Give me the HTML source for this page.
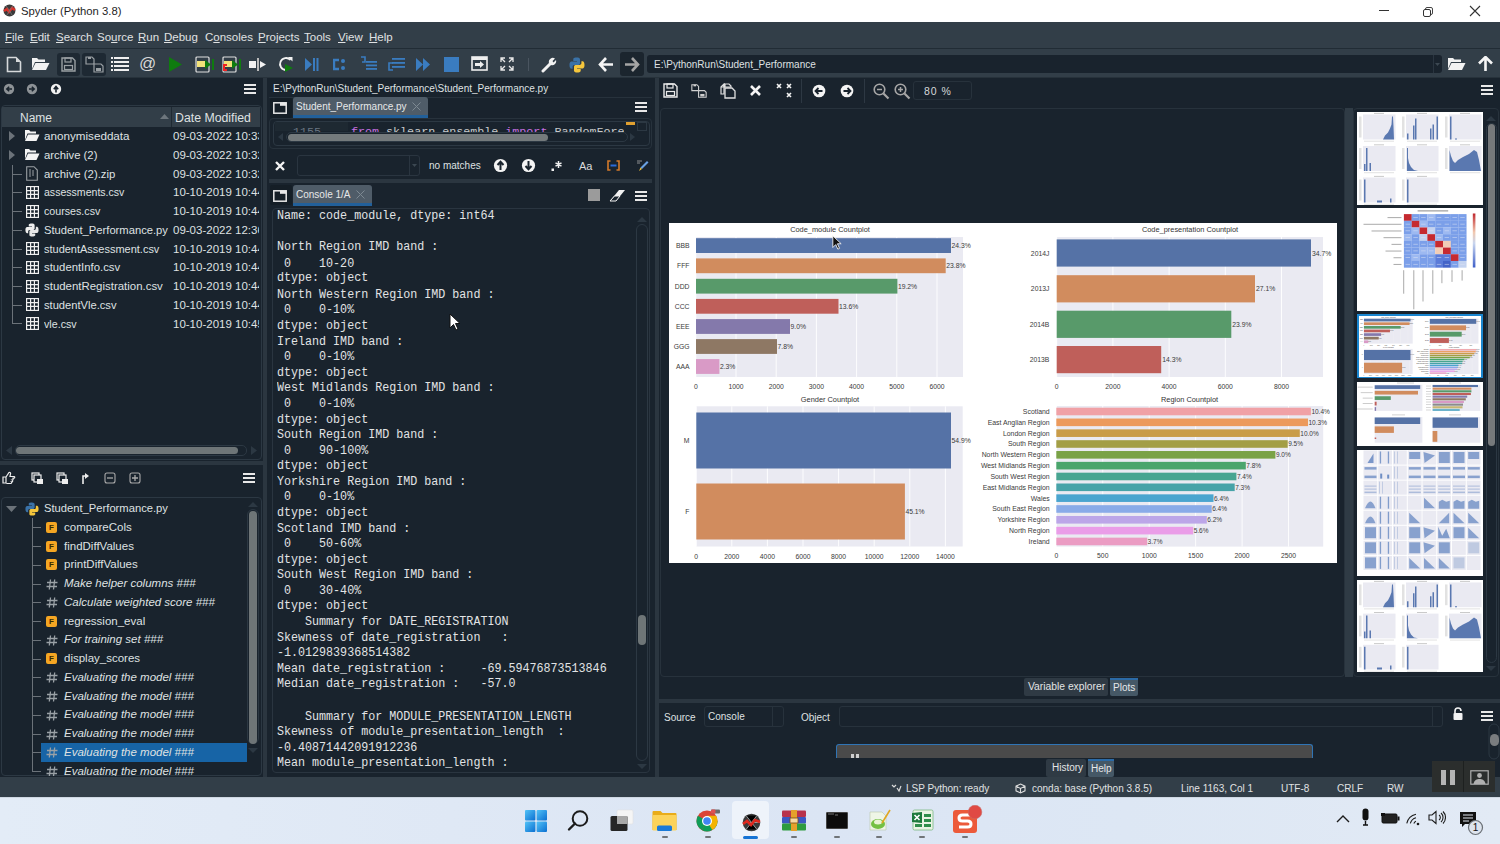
<!DOCTYPE html>
<html><head><meta charset="utf-8">
<style>
*{margin:0;padding:0;box-sizing:border-box}
html,body{width:1500px;height:844px;overflow:hidden;background:#19232D;font-family:"Liberation Sans",sans-serif;color:#dfe1e2}
.a{position:absolute}
.t{position:absolute;white-space:pre;line-height:1}
.mono{font-family:"Liberation Mono",monospace}
.frame{position:absolute;border:1px solid #2c3843;border-radius:4px}
.hb{position:absolute;width:12px;height:10px;border-top:2px solid #e8e8e8;border-bottom:2px solid #e8e8e8}
.hb:after{content:"";position:absolute;left:0;right:0;top:2px;height:2px;background:#e8e8e8}
</style></head><body>

<!-- TITLE BAR -->
<div class="a" style="left:0;top:0;width:1500px;height:22px;background:#fff"></div>
<svg class="a" style="left:3px;top:4px" width="13" height="13" viewBox="0 0 13 13"><circle cx="6.5" cy="6.5" r="6" fill="#3a3a3a"/><path d="M1 7 L4 5 L6 8 L9 4 L12 6" stroke="#d9302a" stroke-width="2.4" fill="none"/><path d="M3 2 L6.5 6.5 M10 2 L6.5 6.5 M6.5 6.5 L4 11 M6.5 6.5 L9 11" stroke="#777" stroke-width="0.8"/></svg>
<div class="t" style="left:21px;top:6px;font-size:11.3px;color:#1f1f1f">Spyder (Python 3.8)</div>
<div class="a" style="left:1379px;top:10px;width:10px;height:1px;background:#333"></div>
<div class="a" style="left:1425px;top:7px;width:8px;height:8px;border:1px solid #444;border-radius:2px"></div>
<div class="a" style="left:1423px;top:9px;width:8px;height:8px;border:1px solid #333;border-radius:2px;background:#fff"></div>
<svg class="a" style="left:1469px;top:5px" width="12" height="12" viewBox="0 0 12 12"><path d="M1 1L11 11M11 1L1 11" stroke="#333" stroke-width="1.1"/></svg>

<!-- MENU BAR -->
<div class="a" style="left:0;top:22px;width:1500px;height:26px;background:#323e48"></div>
<div class="a" style="left:0;top:48px;width:1500px;height:1px;background:#212c35"></div>
<div class="menu" style="position:absolute;left:0;top:31.5px;font-size:11.5px;color:#e0e2e3">
<span class="t" style="left:5px"><u>F</u>ile</span>
<span class="t" style="left:30px"><u>E</u>dit</span>
<span class="t" style="left:56px"><u>S</u>earch</span>
<span class="t" style="left:97px">So<u>u</u>rce</span>
<span class="t" style="left:138px"><u>R</u>un</span>
<span class="t" style="left:164px"><u>D</u>ebug</span>
<span class="t" style="left:205px">C<u>o</u>nsoles</span>
<span class="t" style="left:258px"><u>P</u>rojects</span>
<span class="t" style="left:304px"><u>T</u>ools</span>
<span class="t" style="left:338px"><u>V</u>iew</span>
<span class="t" style="left:369px"><u>H</u>elp</span>
</div>

<!-- TOOLBAR -->
<div class="a" style="left:0;top:49px;width:1500px;height:28px;background:#323e48"></div>
<div class="a" style="left:0;top:77px;width:1500px;height:1px;background:#27323b"></div>
<!-- dark button backgrounds -->
<div class="a" style="left:57px;top:53px;width:23px;height:23px;background:#1e2933;border-radius:3px"></div>
<div class="a" style="left:82px;top:53px;width:24px;height:23px;background:#1e2933;border-radius:3px"></div>
<div class="a" style="left:620px;top:52px;width:24px;height:24px;background:#1b252e;border-radius:3px"></div>
<!-- new file -->
<svg class="a" style="left:6px;top:56px" width="16" height="17" viewBox="0 0 16 17"><path d="M1.5 1.5H10L14.5 6V15.5H1.5Z" fill="none" stroke="#d6d9db" stroke-width="1.6"/><path d="M10 1.5V6H14.5Z" fill="#d6d9db"/></svg>
<!-- open folder -->
<svg class="a" style="left:31px;top:57px" width="19" height="14" viewBox="0 0 19 14"><path d="M1 1H6L7.5 2.5H14V5H4L1 12Z" fill="#f2f2f2"/><path d="M4.5 6H18.5L15 13H1Z" fill="#f2f2f2"/></svg>
<!-- save -->
<svg class="a" style="left:61px;top:57px" width="15" height="15" viewBox="0 0 15 15"><path d="M1 1H11.5L14 3.5V14H1Z" fill="none" stroke="#9aa0a4" stroke-width="1.4"/><rect x="4" y="1" width="6" height="4" fill="none" stroke="#9aa0a4" stroke-width="1.2"/><rect x="3.5" y="8.5" width="8" height="4" fill="none" stroke="#9aa0a4" stroke-width="1.2"/></svg>
<!-- save all -->
<svg class="a" style="left:85px;top:56px" width="19" height="17" viewBox="0 0 19 17"><path d="M1 1H7L9 3V8H1Z" fill="none" stroke="#9aa0a4" stroke-width="1.2"/><path d="M9 8H16L18 10V16H9Z" fill="#1e2933" stroke="#9aa0a4" stroke-width="1.2"/><rect x="11" y="12" width="5" height="3" fill="#9aa0a4"/><rect x="3" y="1" width="3" height="2" fill="#9aa0a4"/></svg>
<!-- list -->
<svg class="a" style="left:111px;top:57px" width="18" height="14" viewBox="0 0 18 14"><g fill="#f0f0f0"><rect x="0" y="0" width="2" height="2"/><rect x="3" y="0" width="15" height="2"/><rect x="0" y="4" width="2" height="2"/><rect x="3" y="4" width="15" height="2"/><rect x="0" y="8" width="2" height="2"/><rect x="3" y="8" width="15" height="2"/><rect x="0" y="12" width="2" height="2"/><rect x="3" y="12" width="15" height="2"/></g></svg>
<!-- @ -->
<div class="t" style="left:139px;top:55px;font-size:17px;color:#d8d8d8">@</div>
<!-- play green -->
<svg class="a" style="left:169px;top:57px" width="14" height="15" viewBox="0 0 14 15"><path d="M0 0L13 7.5L0 15Z" fill="#0f7b0f"/></svg>
<!-- run cell -->
<svg class="a" style="left:195px;top:56px" width="20" height="17" viewBox="0 0 20 17"><rect x="1" y="1" width="13" height="15" rx="1" fill="none" stroke="#e0e0e0" stroke-width="1.2"/><rect x="2" y="5" width="9" height="6" fill="#f3e27a"/><path d="M10 4L16 8.5L10 13Z" fill="#0f7b0f"/><rect x="17" y="3" width="2" height="11" fill="#0f7b0f"/></svg>
<!-- run cell advance -->
<svg class="a" style="left:222px;top:56px" width="20" height="17" viewBox="0 0 20 17"><rect x="1" y="1" width="13" height="15" rx="1" fill="none" stroke="#e0e0e0" stroke-width="1.2"/><rect x="2" y="5" width="9" height="6" fill="#f3e27a"/><path d="M10 4L16 8.5L10 13Z" fill="#0f7b0f"/><rect x="17" y="3" width="2" height="11" fill="#0f7b0f"/><path d="M5 9H2V14H5" fill="none" stroke="#ee2222" stroke-width="2"/></svg>
<!-- run selection -->
<svg class="a" style="left:249px;top:57px" width="18" height="15" viewBox="0 0 18 15"><rect x="0" y="4" width="7" height="7" fill="#f2f2f2"/><rect x="8" y="1" width="2" height="13" fill="#bbb"/><path d="M11 4L17 7.5L11 11Z" fill="#f2f2f2"/></svg>
<!-- rerun -->
<svg class="a" style="left:278px;top:56px" width="17" height="17" viewBox="0 0 17 17"><path d="M12.5 4A6 6 0 1 0 8 14" fill="none" stroke="#f2f2f2" stroke-width="1.8"/><path d="M10 1H14.5V5.5Z" fill="#f2f2f2"/><path d="M7 8L15 12L7 16Z" fill="#0f7b0f"/></svg>
<!-- debug -->
<svg class="a" style="left:305px;top:57px" width="14" height="15" viewBox="0 0 14 15"><path d="M0 1L7 7.5L0 14Z" fill="#3a7cc0"/><rect x="8" y="1" width="2" height="13" fill="#3a7cc0"/><rect x="11.5" y="1" width="2" height="13" fill="#3a7cc0"/></svg>
<svg class="a" style="left:333px;top:58px" width="14" height="13" viewBox="0 0 14 13"><path d="M6 2H1V11H6" fill="none" stroke="#3a7cc0" stroke-width="2.4"/><circle cx="10" cy="3" r="2" fill="#3a7cc0"/><circle cx="10" cy="10" r="2" fill="#3a7cc0"/></svg>
<svg class="a" style="left:360px;top:56px" width="18" height="14" viewBox="0 0 18 14"><path d="M1 1H5V6H2" fill="none" stroke="#3a7cc0" stroke-width="1.6"/><rect x="6" y="5" width="11" height="1.8" fill="#3a7cc0"/><rect x="6" y="8.5" width="11" height="1.8" fill="#3a7cc0"/><rect x="6" y="12" width="11" height="1.8" fill="#3a7cc0"/></svg>
<svg class="a" style="left:388px;top:57px" width="17" height="15" viewBox="0 0 17 15"><rect x="4" y="1" width="13" height="1.8" fill="#3a7cc0"/><rect x="4" y="5" width="13" height="1.8" fill="#3a7cc0"/><rect x="4" y="9" width="13" height="1.8" fill="#3a7cc0"/><path d="M5 6H1V13H5" fill="none" stroke="#3a7cc0" stroke-width="1.6"/></svg>
<svg class="a" style="left:416px;top:58px" width="15" height="13" viewBox="0 0 15 13"><path d="M0 0L7 6.5L0 13Z M7 0L14 6.5L7 13Z" fill="#3a7cc0"/></svg>
<div class="a" style="left:444px;top:57px;width:15px;height:15px;background:#3a7cc0"></div>
<!-- maximize pane -->
<svg class="a" style="left:471px;top:56px" width="17" height="15" viewBox="0 0 17 15"><rect x="1" y="1" width="15" height="13" fill="none" stroke="#eee" stroke-width="1.6"/><rect x="1" y="1" width="15" height="3" fill="#eee"/><path d="M4 7H9V5L13 8.5L9 12V10H4Z" fill="#eee"/></svg>
<!-- fullscreen -->
<svg class="a" style="left:500px;top:57px" width="14" height="14" viewBox="0 0 14 14"><path d="M1 5V1H5M9 1H13V5M13 9V13H9M5 13H1V9M1 1L5 5M13 1L9 5M13 13L9 9M1 13L5 9" fill="none" stroke="#e8e8e8" stroke-width="1.3"/></svg>
<div class="a" style="left:528px;top:58px;width:1px;height:13px;background:#4a5560"></div>
<!-- wrench -->
<svg class="a" style="left:541px;top:57px" width="17" height="16" viewBox="0 0 17 16"><path d="M2 14L9 7" stroke="#f2f2f2" stroke-width="3" stroke-linecap="round"/><path d="M8 6A4 4 0 0 1 14 1.5L11.5 4L12.5 5.5L15 3A4 4 0 0 1 10 8Z" fill="#f2f2f2"/></svg>
<!-- python -->
<svg class="a" style="left:569px;top:57px" width="16" height="16" viewBox="0 0 16 16"><path d="M7.8 0.5C4 0.5 4.3 2.2 4.3 2.2V4H8V4.6H2.6C2.6 4.6 0.5 4.4 0.5 8.1C0.5 11.8 2.4 11.7 2.4 11.7H3.6V9.9C3.6 9.9 3.5 8 5.4 8H9.2C9.2 8 11 8 11 6.3V2.5C11 2.5 11.3 0.5 7.8 0.5Z" fill="#3a72a8"/><path d="M8.2 15.5C12 15.5 11.7 13.8 11.7 13.8V12H8V11.4H13.4C13.4 11.4 15.5 11.6 15.5 7.9C15.5 4.2 13.6 4.3 13.6 4.3H12.4V6.1C12.4 6.1 12.5 8 10.6 8H6.8C6.8 8 5 8 5 9.7V13.5C5 13.5 4.7 15.5 8.2 15.5Z" fill="#f5c63c"/></svg>
<!-- back/forward -->
<svg class="a" style="left:598px;top:57px" width="16" height="15" viewBox="0 0 16 15"><path d="M8 1L2 7.5L8 14M2.5 7.5H15" fill="none" stroke="#f5f5f5" stroke-width="2.6"/></svg>
<svg class="a" style="left:624px;top:57px" width="16" height="15" viewBox="0 0 16 15"><path d="M8 1L14 7.5L8 14M13.5 7.5H1" fill="none" stroke="#a5a5a5" stroke-width="2.6"/></svg>
<!-- path combo -->
<div class="a" style="left:647px;top:55px;width:795px;height:18px;background:#19232D;border-radius:3px"></div>
<div class="a" style="left:1433px;top:55px;width:1px;height:18px;background:#2a3540"></div><svg class="a" style="left:1435px;top:63px" width="5" height="3"><path d="M0 0L5 0L2.5 3Z" fill="#3c4852"/></svg>
<div class="t" style="left:654px;top:60px;font-size:10px;color:#dfe1e2">E:\PythonRun\Student_Performance</div>
<svg class="a" style="left:1447px;top:57px" width="19" height="14" viewBox="0 0 19 14"><path d="M1 1H6L7.5 2.5H14V5H4L1 12Z" fill="#f2f2f2"/><path d="M4.5 6H18.5L15 13H1Z" fill="#f2f2f2"/></svg>
<svg class="a" style="left:1478px;top:56px" width="15" height="16" viewBox="0 0 15 16"><path d="M1 7.5L7.5 1L14 7.5M7.5 2V15" fill="none" stroke="#f5f5f5" stroke-width="2.6"/></svg>

<!-- LEFT PANE: file explorer -->
<svg class="a" style="left:3px;top:83px" width="62" height="12" viewBox="0 0 62 12"><circle cx="6" cy="6" r="5.2" fill="#8d9296"/><circle cx="29" cy="6" r="5.2" fill="#8d9296"/><path d="M9 6H4M6.2 3.8L3.8 6L6.2 8.2" stroke="#19232D" stroke-width="1.5" fill="none"/><path d="M26 6H31M28.8 3.8L31.2 6L28.8 8.2" stroke="#19232D" stroke-width="1.5" fill="none"/><circle cx="53" cy="6" r="5.2" fill="#f2f2f2"/><path d="M53 9.5V4M50.8 6.2L53 3.5L55.2 6.2" stroke="#19232D" stroke-width="1.6" fill="none"/></svg>
<div class="hb" style="left:244px;top:84px"></div>
<div class="frame" style="left:1px;top:105px;width:261px;height:355px"></div>
<div class="a" style="left:2px;top:107px;width:258px;height:20px;background:#323e48"></div>
<div class="a" style="left:171px;top:107px;width:1px;height:20px;background:#1f2a33"></div>
<div class="t" style="left:20px;top:112px;font-size:12px;color:#dfe1e2">Name</div>
<svg class="a" style="left:160px;top:114px" width="9" height="5"><path d="M0 5L4.5 0L9 5Z" fill="#6d767d"/></svg>
<div class="t" style="left:175px;top:112px;font-size:12.3px;color:#dfe1e2">Date Modified</div>
<div style="position:absolute;left:0;top:127px;width:259px;height:210px;overflow:hidden;font-size:11.5px;color:#dfe1e2">
  <svg class="a" style="left:9px;top:4px" width="6" height="10"><path d="M0 0L6 5L0 10Z" fill="#6b7279"/></svg>
  <svg class="a" style="left:9px;top:23px" width="6" height="10"><path d="M0 0L6 5L0 10Z" fill="#6b7279"/></svg>
  <div class="a" style="left:12px;top:38px;width:1px;height:159px;background:#6b7279"></div>
  <div class="a" style="left:12px;top:47px;width:10px;height:1px;background:#6b7279"></div>
  <div class="a" style="left:12px;top:65px;width:10px;height:1px;background:#6b7279"></div>
  <div class="a" style="left:12px;top:84px;width:10px;height:1px;background:#6b7279"></div>
  <div class="a" style="left:12px;top:103px;width:10px;height:1px;background:#6b7279"></div>
  <div class="a" style="left:12px;top:122px;width:10px;height:1px;background:#6b7279"></div>
  <div class="a" style="left:12px;top:140px;width:10px;height:1px;background:#6b7279"></div>
  <div class="a" style="left:12px;top:159px;width:10px;height:1px;background:#6b7279"></div>
  <div class="a" style="left:12px;top:178px;width:10px;height:1px;background:#6b7279"></div>
  <div class="a" style="left:12px;top:196px;width:10px;height:1px;background:#6b7279"></div>
  <!-- icons -->
  <svg class="a" style="left:24px;top:2px" width="16" height="13" viewBox="0 0 16 13"><path d="M1 1H5L6.5 2.5H12V4.5H3.5L1 11Z" fill="#f4f4f4"/><path d="M4 5.5H15.5L12.5 12H1Z" fill="#f4f4f4"/></svg>
  <svg class="a" style="left:24px;top:21px" width="16" height="13" viewBox="0 0 16 13"><path d="M1 1H5L6.5 2.5H12V4.5H3.5L1 11Z" fill="#f4f4f4"/><path d="M4 5.5H15.5L12.5 12H1Z" fill="#f4f4f4"/></svg>
  <svg class="a" style="left:26px;top:39px" width="12" height="15" viewBox="0 0 12 15"><path d="M0.7 0.7H8L11.3 4V14.3H0.7Z" fill="none" stroke="#9ba0a4" stroke-width="1.1"/><path d="M4 3V11M7 4V10" stroke="#9ba0a4" stroke-width="1"/></svg>
  <svg class="a" style="left:26px;top:59px;" width="13" height="13" viewBox="0 0 13 13"><g fill="none" stroke="#f0f0f0" stroke-width="1.2"><rect x="0.6" y="0.6" width="11.8" height="11.8"/><path d="M0.6 4.6H12.4M0.6 8.4H12.4M4.6 0.6V12.4M8.4 0.6V12.4"/></g></svg>
  <svg class="a" style="left:26px;top:78px;" width="13" height="13" viewBox="0 0 13 13"><g fill="none" stroke="#f0f0f0" stroke-width="1.2"><rect x="0.6" y="0.6" width="11.8" height="11.8"/><path d="M0.6 4.6H12.4M0.6 8.4H12.4M4.6 0.6V12.4M8.4 0.6V12.4"/></g></svg>
  <svg class="a" style="left:25px;top:96px" width="14" height="14" viewBox="0 0 16 16"><path d="M7.8 0.5C4 0.5 4.3 2.2 4.3 2.2V4H8V4.6H2.6C2.6 4.6 0.5 4.4 0.5 8.1C0.5 11.8 2.4 11.7 2.4 11.7H3.6V9.9C3.6 9.9 3.5 8 5.4 8H9.2C9.2 8 11 8 11 6.3V2.5C11 2.5 11.3 0.5 7.8 0.5Z" fill="#f0f0f0"/><path d="M8.2 15.5C12 15.5 11.7 13.8 11.7 13.8V12H8V11.4H13.4C13.4 11.4 15.5 11.6 15.5 7.9C15.5 4.2 13.6 4.3 13.6 4.3H12.4V6.1C12.4 6.1 12.5 8 10.6 8H6.8C6.8 8 5 8 5 9.7V13.5C5 13.5 4.7 15.5 8.2 15.5Z" fill="#e8e8e8"/></svg>
  <svg class="a" style="left:26px;top:115px;" width="13" height="13" viewBox="0 0 13 13"><g fill="none" stroke="#f0f0f0" stroke-width="1.2"><rect x="0.6" y="0.6" width="11.8" height="11.8"/><path d="M0.6 4.6H12.4M0.6 8.4H12.4M4.6 0.6V12.4M8.4 0.6V12.4"/></g></svg>
  <svg class="a" style="left:26px;top:134px;" width="13" height="13" viewBox="0 0 13 13"><g fill="none" stroke="#f0f0f0" stroke-width="1.2"><rect x="0.6" y="0.6" width="11.8" height="11.8"/><path d="M0.6 4.6H12.4M0.6 8.4H12.4M4.6 0.6V12.4M8.4 0.6V12.4"/></g></svg>
  <svg class="a" style="left:26px;top:153px;" width="13" height="13" viewBox="0 0 13 13"><g fill="none" stroke="#f0f0f0" stroke-width="1.2"><rect x="0.6" y="0.6" width="11.8" height="11.8"/><path d="M0.6 4.6H12.4M0.6 8.4H12.4M4.6 0.6V12.4M8.4 0.6V12.4"/></g></svg>
  <svg class="a" style="left:26px;top:171px;" width="13" height="13" viewBox="0 0 13 13"><g fill="none" stroke="#f0f0f0" stroke-width="1.2"><rect x="0.6" y="0.6" width="11.8" height="11.8"/><path d="M0.6 4.6H12.4M0.6 8.4H12.4M4.6 0.6V12.4M8.4 0.6V12.4"/></g></svg>
  <svg class="a" style="left:26px;top:190px;" width="13" height="13" viewBox="0 0 13 13"><g fill="none" stroke="#f0f0f0" stroke-width="1.2"><rect x="0.6" y="0.6" width="11.8" height="11.8"/><path d="M0.6 4.6H12.4M0.6 8.4H12.4M4.6 0.6V12.4M8.4 0.6V12.4"/></g></svg>
  <!-- names -->
  <div class="t" style="left:44px;top:4px;transform:scaleX(1.014);transform-origin:0 0">anonymiseddata</div>
  <div class="t" style="left:44px;top:23px;transform:scaleX(0.983);transform-origin:0 0">archive (2)</div>
  <div class="t" style="left:44px;top:42px;transform:scaleX(0.988);transform-origin:0 0">archive (2).zip</div>
  <div class="t" style="left:44px;top:60px;transform:scaleX(0.918);transform-origin:0 0">assessments.csv</div>
  <div class="t" style="left:44px;top:79px;transform:scaleX(0.928);transform-origin:0 0">courses.csv</div>
  <div class="t" style="left:44px;top:98px;transform:scaleX(0.974);transform-origin:0 0">Student_Performance.py</div>
  <div class="t" style="left:44px;top:117px;transform:scaleX(0.955);transform-origin:0 0">studentAssessment.csv</div>
  <div class="t" style="left:44px;top:135px;transform:scaleX(0.984);transform-origin:0 0">studentInfo.csv</div>
  <div class="t" style="left:44px;top:154px;transform:scaleX(0.994);transform-origin:0 0">studentRegistration.csv</div>
  <div class="t" style="left:44px;top:173px;transform:scaleX(0.969);transform-origin:0 0">studentVle.csv</div>
  <div class="t" style="left:44px;top:192px;transform:scaleX(0.929);transform-origin:0 0">vle.csv</div>
  <!-- dates -->
  <div class="t" style="left:173px;top:4px">09-03-2022 10:33</div>
  <div class="t" style="left:173px;top:23px">09-03-2022 10:32</div>
  <div class="t" style="left:173px;top:42px">09-03-2022 10:32</div>
  <div class="t" style="left:173px;top:60px">10-10-2019 10:44</div>
  <div class="t" style="left:173px;top:79px">10-10-2019 10:44</div>
  <div class="t" style="left:173px;top:98px">09-03-2022 12:36</div>
  <div class="t" style="left:173px;top:117px">10-10-2019 10:44</div>
  <div class="t" style="left:173px;top:135px">10-10-2019 10:44</div>
  <div class="t" style="left:173px;top:154px">10-10-2019 10:44</div>
  <div class="t" style="left:173px;top:173px">10-10-2019 10:44</div>
  <div class="t" style="left:173px;top:192px">10-10-2019 10:45</div>
</div>
<!-- h scrollbar -->
<svg class="a" style="left:6px;top:446px" width="6" height="9"><path d="M6 0L0 4.5L6 9Z" fill="#2c3843"/></svg>
<div class="a" style="left:15px;top:445px;width:232px;height:11px;border:1px solid #2c3843;border-radius:5px"></div>
<div class="a" style="left:16px;top:447px;width:222px;height:7px;background:#6e7577;border-radius:4px"></div>
<svg class="a" style="left:251px;top:446px" width="6" height="9"><path d="M0 0L6 4.5L0 9Z" fill="#2c3843"/></svg>

<!-- outline toolbar -->
<svg class="a" style="left:2px;top:471px" width="140" height="14" viewBox="0 0 140 14">
 <g fill="none" stroke="#eee" stroke-width="1.2">
  <path d="M1 6H4V12H1Z M4 6L7 1.5C8 1 9 2 8.5 3L8 5.5H12C13 5.5 13 7 12 7.2H10.5C11.5 7.5 11.3 9 10.3 9C11 9.5 10.8 10.8 9.8 10.8H9.5C10 11.3 9.6 12.5 8.8 12.5H4.5"/>
  <rect x="30" y="2" width="7" height="7"/><rect x="32" y="4" width="7" height="7" fill="#19232D"/>
  <rect x="55" y="2" width="7" height="7"/><rect x="57" y="4" width="7" height="7" fill="#19232D"/>
 </g>
 <rect x="35" y="8" width="6" height="5" fill="#eee"/><rect x="60" y="8" width="6" height="5" fill="#eee"/>
 <path d="M81 13V5H85" fill="none" stroke="#eee" stroke-width="1.6"/><path d="M83 2L87 5L83 8Z" fill="#eee"/>
 <rect x="103" y="2" width="10" height="10" rx="2" fill="none" stroke="#aaa" stroke-width="1.1"/><path d="M105 7H111" stroke="#aaa" stroke-width="1.3"/>
 <rect x="128" y="2" width="10" height="10" rx="2" fill="none" stroke="#aaa" stroke-width="1.1"/><path d="M130 7H136M133 4V10" stroke="#aaa" stroke-width="1.3"/>
</svg>
<div class="hb" style="left:243px;top:473px"></div>

<!-- outline tree -->
<div class="frame" style="left:1px;top:497px;width:261px;height:279px"></div>
<div style="position:absolute;left:0;top:499px;width:250px;height:277px;overflow:hidden;font-size:11.5px;color:#dfe1e2">
  <div class="a" style="left:41px;top:244px;width:206px;height:19px;background:#1764a6"></div>
  <svg class="a" style="left:6px;top:7px" width="11" height="6"><path d="M0 0L11 0L5.5 6Z" fill="#6b7279"/></svg>
  <svg class="a" style="left:25px;top:3px" width="14" height="14" viewBox="0 0 16 16"><path d="M7.8 0.5C4 0.5 4.3 2.2 4.3 2.2V4H8V4.6H2.6C2.6 4.6 0.5 4.4 0.5 8.1C0.5 11.8 2.4 11.7 2.4 11.7H3.6V9.9C3.6 9.9 3.5 8 5.4 8H9.2C9.2 8 11 8 11 6.3V2.5C11 2.5 11.3 0.5 7.8 0.5Z" fill="#3a72a8"/><path d="M8.2 15.5C12 15.5 11.7 13.8 11.7 13.8V12H8V11.4H13.4C13.4 11.4 15.5 11.6 15.5 7.9C15.5 4.2 13.6 4.3 13.6 4.3H12.4V6.1C12.4 6.1 12.5 8 10.6 8H6.8C6.8 8 5 8 5 9.7V13.5C5 13.5 4.7 15.5 8.2 15.5Z" fill="#f5c63c"/></svg>
  <div class="t" style="left:44px;top:4px;transform:scaleX(0.974);transform-origin:0 0">Student_Performance.py</div>
  <div class="a" style="left:32px;top:19px;width:1px;height:254px;background:#6b7279"></div>
  <div class="a" style="left:32px;top:28.4px;width:9px;height:1px;background:#6b7279"></div>
<div class="a" style="left:46px;top:22.9px;width:11px;height:11px;background:#f5a623;border-radius:2px;color:#3a2a00;font:bold 8px/11px 'Liberation Sans',sans-serif;text-align:center">F</div>
<div class="t" style="left:64px;top:22.9px">compareCols</div>
<div class="a" style="left:32px;top:47.1px;width:9px;height:1px;background:#6b7279"></div>
<div class="a" style="left:46px;top:41.6px;width:11px;height:11px;background:#f5a623;border-radius:2px;color:#3a2a00;font:bold 8px/11px 'Liberation Sans',sans-serif;text-align:center">F</div>
<div class="t" style="left:64px;top:41.6px">findDiffValues</div>
<div class="a" style="left:32px;top:65.9px;width:9px;height:1px;background:#6b7279"></div>
<div class="a" style="left:46px;top:60.4px;width:11px;height:11px;background:#f5a623;border-radius:2px;color:#3a2a00;font:bold 8px/11px 'Liberation Sans',sans-serif;text-align:center">F</div>
<div class="t" style="left:64px;top:60.4px">printDiffValues</div>
<div class="a" style="left:32px;top:84.7px;width:9px;height:1px;background:#6b7279"></div>
<svg class="a" style="left:46px;top:79.7px" width="12" height="11" viewBox="0 0 12 11"><path d="M4.5 0.5L3.3 10.5M8.7 0.5L7.5 10.5M1 3.5H11.5M0.5 7.5H11" stroke="#9aa1a6" stroke-width="1.3"/></svg>
<div class="t" style="left:64px;top:79.2px;font-style:italic">Make helper columns ###</div>
<div class="a" style="left:32px;top:103.4px;width:9px;height:1px;background:#6b7279"></div>
<svg class="a" style="left:46px;top:98.4px" width="12" height="11" viewBox="0 0 12 11"><path d="M4.5 0.5L3.3 10.5M8.7 0.5L7.5 10.5M1 3.5H11.5M0.5 7.5H11" stroke="#9aa1a6" stroke-width="1.3"/></svg>
<div class="t" style="left:64px;top:97.9px;font-style:italic">Calculate weighted score ###</div>
<div class="a" style="left:32px;top:122.2px;width:9px;height:1px;background:#6b7279"></div>
<div class="a" style="left:46px;top:116.7px;width:11px;height:11px;background:#f5a623;border-radius:2px;color:#3a2a00;font:bold 8px/11px 'Liberation Sans',sans-serif;text-align:center">F</div>
<div class="t" style="left:64px;top:116.7px">regression_eval</div>
<div class="a" style="left:32px;top:140.9px;width:9px;height:1px;background:#6b7279"></div>
<svg class="a" style="left:46px;top:135.9px" width="12" height="11" viewBox="0 0 12 11"><path d="M4.5 0.5L3.3 10.5M8.7 0.5L7.5 10.5M1 3.5H11.5M0.5 7.5H11" stroke="#9aa1a6" stroke-width="1.3"/></svg>
<div class="t" style="left:64px;top:135.4px;font-style:italic">For training set ###</div>
<div class="a" style="left:32px;top:159.7px;width:9px;height:1px;background:#6b7279"></div>
<div class="a" style="left:46px;top:154.2px;width:11px;height:11px;background:#f5a623;border-radius:2px;color:#3a2a00;font:bold 8px/11px 'Liberation Sans',sans-serif;text-align:center">F</div>
<div class="t" style="left:64px;top:154.2px">display_scores</div>
<div class="a" style="left:32px;top:178.4px;width:9px;height:1px;background:#6b7279"></div>
<svg class="a" style="left:46px;top:173.4px" width="12" height="11" viewBox="0 0 12 11"><path d="M4.5 0.5L3.3 10.5M8.7 0.5L7.5 10.5M1 3.5H11.5M0.5 7.5H11" stroke="#9aa1a6" stroke-width="1.3"/></svg>
<div class="t" style="left:64px;top:172.9px;font-style:italic">Evaluating the model ###</div>
<div class="a" style="left:32px;top:197.2px;width:9px;height:1px;background:#6b7279"></div>
<svg class="a" style="left:46px;top:192.2px" width="12" height="11" viewBox="0 0 12 11"><path d="M4.5 0.5L3.3 10.5M8.7 0.5L7.5 10.5M1 3.5H11.5M0.5 7.5H11" stroke="#9aa1a6" stroke-width="1.3"/></svg>
<div class="t" style="left:64px;top:191.7px;font-style:italic">Evaluating the model ###</div>
<div class="a" style="left:32px;top:215.9px;width:9px;height:1px;background:#6b7279"></div>
<svg class="a" style="left:46px;top:210.9px" width="12" height="11" viewBox="0 0 12 11"><path d="M4.5 0.5L3.3 10.5M8.7 0.5L7.5 10.5M1 3.5H11.5M0.5 7.5H11" stroke="#9aa1a6" stroke-width="1.3"/></svg>
<div class="t" style="left:64px;top:210.4px;font-style:italic">Evaluating the model ###</div>
<div class="a" style="left:32px;top:234.7px;width:9px;height:1px;background:#6b7279"></div>
<svg class="a" style="left:46px;top:229.7px" width="12" height="11" viewBox="0 0 12 11"><path d="M4.5 0.5L3.3 10.5M8.7 0.5L7.5 10.5M1 3.5H11.5M0.5 7.5H11" stroke="#9aa1a6" stroke-width="1.3"/></svg>
<div class="t" style="left:64px;top:229.2px;font-style:italic">Evaluating the model ###</div>
<div class="a" style="left:32px;top:253.4px;width:9px;height:1px;background:#6b7279"></div>
<svg class="a" style="left:46px;top:248.4px" width="12" height="11" viewBox="0 0 12 11"><path d="M4.5 0.5L3.3 10.5M8.7 0.5L7.5 10.5M1 3.5H11.5M0.5 7.5H11" stroke="#9aa1a6" stroke-width="1.3"/></svg>
<div class="t" style="left:64px;top:247.9px;font-style:italic">Evaluating the model ###</div>
<div class="a" style="left:32px;top:272.1px;width:9px;height:1px;background:#6b7279"></div>
<svg class="a" style="left:46px;top:267.1px" width="12" height="11" viewBox="0 0 12 11"><path d="M4.5 0.5L3.3 10.5M8.7 0.5L7.5 10.5M1 3.5H11.5M0.5 7.5H11" stroke="#9aa1a6" stroke-width="1.3"/></svg>
<div class="t" style="left:64px;top:266.6px;font-style:italic">Evaluating the model ###</div>
</div>
<!-- outline v scrollbar -->
<svg class="a" style="left:248px;top:502px" width="10" height="5"><path d="M0 5L5 0L10 5Z" fill="#2c3843"/></svg>
<div class="a" style="left:247px;top:509px;width:12px;height:235px;border:1px solid #2c3843;border-radius:6px"></div>
<div class="a" style="left:249px;top:511px;width:8px;height:233px;background:#6e7577;border-radius:4px"></div>
<svg class="a" style="left:248px;top:748px" width="10" height="5"><path d="M0 0L10 0L5 5Z" fill="#2c3843"/></svg>

<!-- CENTER PANE -->
<div class="t" style="left:273px;top:84px;font-size:10px;color:#dfe1e2">E:\PythonRun\Student_Performance\Student_Performance.py</div>
<!-- editor tab bar -->
<div class="a" style="left:269px;top:97px;width:383px;height:22px;border-top:1px solid #27323c"></div>
<div class="a" style="left:270px;top:98px;width:22px;height:20px;background:#151e26;border-radius:2px"></div>
<svg class="a" style="left:273px;top:102px" width="14" height="12" viewBox="0 0 14 12"><rect x="0.8" y="0.8" width="12.4" height="10.4" fill="none" stroke="#e8e8e8" stroke-width="1.5"/><rect x="7" y="0.8" width="6.2" height="3" fill="#e8e8e8"/></svg>
<div class="a" style="left:293px;top:97px;width:135px;height:18px;background:#4f5c68;border-radius:3px 3px 0 0"></div>
<div class="a" style="left:293px;top:115px;width:135px;height:3px;background:#22609a"></div>
<div class="t" style="left:296px;top:102px;font-size:10px;color:#e6e8e9">Student_Performance.py</div>
<svg class="a" style="left:412px;top:102px" width="9" height="9"><path d="M0.5 0.5L8.5 8.5M8.5 0.5L0.5 8.5" stroke="#7d8992" stroke-width="1"/></svg>
<div class="hb" style="left:635px;top:102px"></div>
<!-- editor (1 line visible) -->
<div class="frame" style="left:269px;top:118px;width:383px;height:31px;border-color:#27323c"></div>
<div class="frame" style="left:273px;top:121px;width:377px;height:25px;border-color:#2c3843"></div>
<div class="a" style="left:275px;top:122px;width:73px;height:9px;background:#1e2932"></div>
<div style="position:absolute;left:274px;top:122px;width:350px;height:9.5px;overflow:hidden">
  <div class="t mono" style="left:19px;top:5px;font-size:11.7px;color:#6b7783">1155</div>
  <div class="t mono" style="left:77px;top:5px;font-size:11.7px;color:#c8cacc"><span style="color:#c670e0">from</span> sklearn.ensemble <span style="color:#c670e0">import</span> RandomForestRegressor</div>
</div>
<div class="a" style="left:626px;top:122px;width:9px;height:3px;background:#e0a030"></div>
<div class="a" style="left:637px;top:122px;width:10px;height:9px;border:1px solid #2c3843"></div>
<svg class="a" style="left:278px;top:133px" width="5" height="8"><path d="M5 0L0 4L5 8Z" fill="#2c3843"/></svg>
<div class="a" style="left:286px;top:132px;width:342px;height:10px;border:1px solid #2c3843;border-radius:5px"></div>
<div class="a" style="left:288px;top:134px;width:260px;height:7px;background:#747a7c;border-radius:4px"></div>
<svg class="a" style="left:630px;top:133px" width="5" height="8"><path d="M0 0L5 4L0 8Z" fill="#2c3843"/></svg>
<!-- find bar -->
<svg class="a" style="left:275px;top:161px" width="10" height="10" viewBox="0 0 10 10"><path d="M1 1L9 9M9 1L1 9" stroke="#f4f4f4" stroke-width="2.4"/></svg>
<div class="a" style="left:297px;top:155px;width:123px;height:21px;border:1px solid #2a3540;border-radius:3px"></div>
<div class="a" style="left:409px;top:156px;width:1px;height:19px;background:#2a3540"></div>
<svg class="a" style="left:412px;top:164px" width="5" height="3"><path d="M0 0L5 0L2.5 3Z" fill="#3c4852"/></svg>
<div class="t" style="left:429px;top:161px;font-size:10px;color:#dfe1e2">no matches</div>
<svg class="a" style="left:493px;top:158px" width="15" height="15" viewBox="0 0 15 15"><circle cx="7.5" cy="7.5" r="6.6" fill="#f4f4f4"/><path d="M7.5 12V4M4.5 7L7.5 3.8L10.5 7" stroke="#19232D" stroke-width="2" fill="none"/></svg>
<svg class="a" style="left:521px;top:158px" width="15" height="15" viewBox="0 0 15 15"><circle cx="7.5" cy="7.5" r="6.6" fill="#f4f4f4"/><path d="M7.5 3V11M4.5 8L7.5 11.2L10.5 8" stroke="#19232D" stroke-width="2" fill="none"/></svg>
<svg class="a" style="left:551px;top:160px" width="12" height="12" viewBox="0 0 12 12"><rect x="0.5" y="8.5" width="2.5" height="2.5" fill="#f0f0f0"/><path d="M7.5 1V8M4.5 2.8L10.5 6.2M10.5 2.8L4.5 6.2" stroke="#f0f0f0" stroke-width="1.5"/></svg>
<div class="t" style="left:579px;top:161px;font-size:11px;color:#dcdcdc">Aa</div>
<svg class="a" style="left:607px;top:160px" width="13" height="11" viewBox="0 0 13 11"><path d="M3.5 1H1V10H3.5M9.5 1H12V10H9.5" fill="none" stroke="#d47a2a" stroke-width="1.6"/><rect x="3.5" y="4.5" width="6" height="2" fill="#2a6bd8"/></svg>
<svg class="a" style="left:636px;top:159px" width="13" height="13" viewBox="0 0 13 13"><path d="M1 2H6M1 4H4" stroke="#aaa" stroke-width="0.8"/><path d="M11 2L12.5 3.5L6 10L4.5 8.5Z" fill="#6aa0e0"/><path d="M4.5 8.5L6 10L3 12Z" fill="#f5c63c"/></svg>
<!-- separator -->
<div class="a" style="left:269px;top:179px;width:383px;height:4px;background:#2b3640"></div>
<!-- console tab bar -->
<div class="a" style="left:270px;top:185px;width:22px;height:20px;background:#151e26;border-radius:2px"></div>
<svg class="a" style="left:273px;top:190px" width="14" height="12" viewBox="0 0 14 12"><rect x="0.8" y="0.8" width="12.4" height="10.4" fill="none" stroke="#e8e8e8" stroke-width="1.5"/><rect x="7" y="0.8" width="6.2" height="3" fill="#e8e8e8"/></svg>
<div class="a" style="left:293px;top:185px;width:79px;height:18px;background:#4f5c68;border-radius:3px 3px 0 0"></div>
<div class="a" style="left:293px;top:203px;width:79px;height:3px;background:#22609a"></div>
<div class="t" style="left:296px;top:190px;font-size:10px;color:#e6e8e9">Console 1/A</div>
<svg class="a" style="left:356px;top:190px" width="9" height="9"><path d="M0.5 0.5L8.5 8.5M8.5 0.5L0.5 8.5" stroke="#7d8992" stroke-width="1"/></svg>
<div class="a" style="left:588px;top:189px;width:12px;height:12px;background:#9b9b9b"></div>
<svg class="a" style="left:609px;top:189px" width="17" height="13" viewBox="0 0 17 13"><path d="M10 1H16L7 12H1Z" fill="#f2f2f2"/><path d="M5.5 7H11L7 12H1Z" fill="#19232D" stroke="#f2f2f2" stroke-width="1"/></svg>
<div class="hb" style="left:635px;top:191px"></div>
<!-- console -->
<div class="frame" style="left:272px;top:208px;width:378px;height:565px;border-color:#2a3540"></div>
<div class="mono" style="position:absolute;left:277px;top:208.8px;font-size:11.7px;line-height:13.583px;color:#e2e4e5;white-space:pre;transform:scaleY(1.15);transform-origin:0 0">Name: code_module, dtype: int64

North Region IMD band :
 0    10-20
dtype: object
North Western Region IMD band :
 0    0-10%
dtype: object
Ireland IMD band :
 0    0-10%
dtype: object
West Midlands Region IMD band :
 0    0-10%
dtype: object
South Region IMD band :
 0    90-100%
dtype: object
Yorkshire Region IMD band :
 0    0-10%
dtype: object
Scotland IMD band :
 0    50-60%
dtype: object
South West Region IMD band :
 0    30-40%
dtype: object
    Summary for DATE_REGISTRATION
Skewness of date_registration   :
-1.0129839368514382
Mean date_registration :     -69.59476873513846
Median date_registration :   -57.0

    Summary for MODULE_PRESENTATION_LENGTH
Skewness of module_presentation_length  :
-0.40871442091912236
Mean module_presentation_length :</div>
<svg class="a" style="left:637px;top:217px" width="10" height="5"><path d="M0 5L5 0L10 5Z" fill="#2c3843"/></svg>
<div class="a" style="left:636px;top:224px;width:12px;height:537px;border:1px solid #2c3843;border-radius:6px"></div>
<div class="a" style="left:638px;top:615px;width:8px;height:30px;background:#6e7577;border-radius:4px"></div>
<svg class="a" style="left:637px;top:764px" width="10" height="5"><path d="M0 0L10 0L5 5Z" fill="#2c3843"/></svg>
<!-- mouse cursor -->
<svg class="a" style="left:449px;top:313px" width="12" height="18" viewBox="0 0 12 18"><path d="M1 1V15L4.5 11.5L7 17L9 16L6.5 10.5H11Z" fill="#fff" stroke="#111" stroke-width="1"/></svg>

<!-- RIGHT PANE -->
<svg class="a" style="left:663px;top:83px" width="15" height="15" viewBox="0 0 15 15"><path d="M1 1H11.5L14 3.5V14H1Z" fill="none" stroke="#eaeaea" stroke-width="1.4"/><rect x="4" y="1" width="6" height="4" fill="none" stroke="#eaeaea" stroke-width="1.2"/><rect x="3.5" y="8.5" width="8" height="4" fill="none" stroke="#eaeaea" stroke-width="1.2"/></svg>
<svg class="a" style="left:691px;top:83px" width="16" height="16" viewBox="0 0 19 17"><path d="M1 1H7L9 3V8H1Z" fill="none" stroke="#cfcfcf" stroke-width="1.3"/><path d="M9 8H16L18 10V16H9Z" fill="#19232D" stroke="#cfcfcf" stroke-width="1.3"/><rect x="11" y="12" width="5" height="3" fill="#cfcfcf"/><rect x="3" y="1" width="3" height="2" fill="#cfcfcf"/></svg>
<svg class="a" style="left:720px;top:83px" width="16" height="16" viewBox="0 0 16 16"><path d="M5 1H9L11 3V4H5Z M1 4L4 1V11H1Z" fill="none" stroke="#e0e0e0" stroke-width="1.2"/><path d="M5 5H12L15 8V15H5Z" fill="#19232D" stroke="#e0e0e0" stroke-width="1.3"/><path d="M1 4H4V1" fill="none" stroke="#e0e0e0" stroke-width="1.2"/></svg>
<svg class="a" style="left:750px;top:85px" width="11" height="11" viewBox="0 0 11 11"><path d="M1 1L10 10M10 1L1 10" stroke="#f4f4f4" stroke-width="2.6"/></svg>
<svg class="a" style="left:776px;top:83px" width="17" height="16" viewBox="0 0 17 16"><path d="M1 1L5 5M5 1L1 5M11 1L15 5M15 1L11 5M11 10L15 14M15 10L11 14" stroke="#f4f4f4" stroke-width="1.6"/></svg>
<div class="a" style="left:801px;top:79px;width:1px;height:24px;background:#2d3843"></div>
<svg class="a" style="left:812px;top:84px" width="14" height="14" viewBox="0 0 14 14"><circle cx="7" cy="7" r="6.3" fill="#f4f4f4"/><path d="M10.5 7H4M6.5 4L3.5 7L6.5 10" stroke="#19232D" stroke-width="1.8" fill="none"/></svg>
<svg class="a" style="left:840px;top:84px" width="14" height="14" viewBox="0 0 14 14"><circle cx="7" cy="7" r="6.3" fill="#f4f4f4"/><path d="M3.5 7H10M7.5 4L10.5 7L7.5 10" stroke="#19232D" stroke-width="1.8" fill="none"/></svg>
<div class="a" style="left:864px;top:79px;width:1px;height:24px;background:#2d3843"></div>
<svg class="a" style="left:873px;top:83px" width="17" height="17" viewBox="0 0 17 17"><circle cx="6.5" cy="6.5" r="5.3" fill="none" stroke="#a6a6a6" stroke-width="1.6"/><path d="M10.5 10.5L15.5 15.5" stroke="#a6a6a6" stroke-width="2.2"/><path d="M4 6.5H9" stroke="#a6a6a6" stroke-width="1.5"/></svg>
<svg class="a" style="left:894px;top:83px" width="17" height="17" viewBox="0 0 17 17"><circle cx="6.5" cy="6.5" r="5.3" fill="none" stroke="#a6a6a6" stroke-width="1.6"/><path d="M10.5 10.5L15.5 15.5" stroke="#a6a6a6" stroke-width="2.2"/><path d="M4 6.5H9M6.5 4V9" stroke="#a6a6a6" stroke-width="1.5"/></svg>
<div class="a" style="left:913px;top:81px;width:59px;height:19px;border:1px solid #27323c;border-radius:3px"></div>
<div class="t" style="left:924px;top:86px;font-size:10.5px;color:#d6d8da;letter-spacing:1px">80 %</div>
<div class="hb" style="left:1481px;top:85px"></div>

<div class="frame" style="left:660px;top:108px;width:685px;height:569px;border-color:#27323c"></div>
<div class="a" style="left:1345px;top:108px;width:8px;height:569px;background:#2f3b45"></div>
<div class="frame" style="left:1353px;top:108px;width:146px;height:569px;border-color:#27323c"></div>
<svg class="a" style="left:669px;top:223px" width="668" height="340" viewBox="669 223 668 340" font-family="Liberation Sans" >
<rect x="669" y="223" width="668" height="340" fill="#ffffff"/>
<rect x="696" y="237" width="267" height="140" fill="#eaeaf2"/>
<line x1="695.8" y1="237" x2="695.8" y2="377" stroke="#ffffff" stroke-width="0.9"/>
<text x="695.8" y="388.5" font-size="6.8" fill="#3a3a3a" text-anchor="middle">0</text>
<line x1="736.0" y1="237" x2="736.0" y2="377" stroke="#ffffff" stroke-width="0.9"/>
<text x="736.0" y="388.5" font-size="6.8" fill="#3a3a3a" text-anchor="middle">1000</text>
<line x1="776.1999999999999" y1="237" x2="776.1999999999999" y2="377" stroke="#ffffff" stroke-width="0.9"/>
<text x="776.1999999999999" y="388.5" font-size="6.8" fill="#3a3a3a" text-anchor="middle">2000</text>
<line x1="816.4" y1="237" x2="816.4" y2="377" stroke="#ffffff" stroke-width="0.9"/>
<text x="816.4" y="388.5" font-size="6.8" fill="#3a3a3a" text-anchor="middle">3000</text>
<line x1="856.5999999999999" y1="237" x2="856.5999999999999" y2="377" stroke="#ffffff" stroke-width="0.9"/>
<text x="856.5999999999999" y="388.5" font-size="6.8" fill="#3a3a3a" text-anchor="middle">4000</text>
<line x1="896.8" y1="237" x2="896.8" y2="377" stroke="#ffffff" stroke-width="0.9"/>
<text x="896.8" y="388.5" font-size="6.8" fill="#3a3a3a" text-anchor="middle">5000</text>
<line x1="937.0" y1="237" x2="937.0" y2="377" stroke="#ffffff" stroke-width="0.9"/>
<text x="937.0" y="388.5" font-size="6.8" fill="#3a3a3a" text-anchor="middle">6000</text>
<text x="830" y="232.1" font-size="7.4" fill="#333" text-anchor="middle">Code_module Countplot</text>
<rect x="696" y="238.2" width="255" height="14.8" fill="#5572a6"/>
<text x="689.5" y="248.1" font-size="6.8" fill="#3a3a3a" text-anchor="end">BBB</text>
<text x="951.5" y="248.1" font-size="6.8" fill="#3a3a3a">24.3%</text>
<rect x="696" y="258.40000000000003" width="249.70000000000005" height="14.8" fill="#d18c5e"/>
<text x="689.5" y="268.3" font-size="6.8" fill="#3a3a3a" text-anchor="end">FFF</text>
<text x="946.2" y="268.3" font-size="6.8" fill="#3a3a3a">23.8%</text>
<rect x="696" y="278.8" width="201.39999999999998" height="14.8" fill="#589a6a"/>
<text x="689.5" y="288.7" font-size="6.8" fill="#3a3a3a" text-anchor="end">DDD</text>
<text x="897.9" y="288.7" font-size="6.8" fill="#3a3a3a">19.2%</text>
<rect x="696" y="298.90000000000003" width="142.5" height="14.8" fill="#bf5f5a"/>
<text x="689.5" y="308.8" font-size="6.8" fill="#3a3a3a" text-anchor="end">CCC</text>
<text x="839.0" y="308.8" font-size="6.8" fill="#3a3a3a">13.6%</text>
<rect x="696" y="319.1" width="94" height="14.8" fill="#8479ab"/>
<text x="689.5" y="329.0" font-size="6.8" fill="#3a3a3a" text-anchor="end">EEE</text>
<text x="790.5" y="329.0" font-size="6.8" fill="#3a3a3a">9.0%</text>
<rect x="696" y="339.1" width="81" height="14.8" fill="#8e7864"/>
<text x="689.5" y="349.0" font-size="6.8" fill="#3a3a3a" text-anchor="end">GGG</text>
<text x="777.5" y="349.0" font-size="6.8" fill="#3a3a3a">7.8%</text>
<rect x="696" y="359.1" width="23.399999999999977" height="14.8" fill="#d99ac6"/>
<text x="689.5" y="369.0" font-size="6.8" fill="#3a3a3a" text-anchor="end">AAA</text>
<text x="719.9" y="369.0" font-size="6.8" fill="#3a3a3a">2.3%</text>
<rect x="1056.7" y="237" width="266.29999999999995" height="140" fill="#eaeaf2"/>
<line x1="1056.7" y1="237" x2="1056.7" y2="377" stroke="#ffffff" stroke-width="0.9"/>
<text x="1056.7" y="388.5" font-size="6.8" fill="#3a3a3a" text-anchor="middle">0</text>
<line x1="1112.9" y1="237" x2="1112.9" y2="377" stroke="#ffffff" stroke-width="0.9"/>
<text x="1112.9" y="388.5" font-size="6.8" fill="#3a3a3a" text-anchor="middle">2000</text>
<line x1="1169.1000000000001" y1="237" x2="1169.1000000000001" y2="377" stroke="#ffffff" stroke-width="0.9"/>
<text x="1169.1000000000001" y="388.5" font-size="6.8" fill="#3a3a3a" text-anchor="middle">4000</text>
<line x1="1225.3000000000002" y1="237" x2="1225.3000000000002" y2="377" stroke="#ffffff" stroke-width="0.9"/>
<text x="1225.3000000000002" y="388.5" font-size="6.8" fill="#3a3a3a" text-anchor="middle">6000</text>
<line x1="1281.5" y1="237" x2="1281.5" y2="377" stroke="#ffffff" stroke-width="0.9"/>
<text x="1281.5" y="388.5" font-size="6.8" fill="#3a3a3a" text-anchor="middle">8000</text>
<text x="1190" y="232.1" font-size="7.4" fill="#333" text-anchor="middle">Code_presentation Countplot</text>
<rect x="1056.7" y="239.4" width="254.29999999999995" height="27.2" fill="#5572a6"/>
<text x="1049.4" y="255.5" font-size="6.8" fill="#3a3a3a" text-anchor="end">2014J</text>
<text x="1312" y="255.5" font-size="6.8" fill="#3a3a3a">34.7%</text>
<rect x="1056.7" y="275.2" width="198.29999999999995" height="27.2" fill="#d18c5e"/>
<text x="1049.4" y="291.3" font-size="6.8" fill="#3a3a3a" text-anchor="end">2013J</text>
<text x="1256" y="291.3" font-size="6.8" fill="#3a3a3a">27.1%</text>
<rect x="1056.7" y="310.7" width="174.5999999999999" height="27.2" fill="#589a6a"/>
<text x="1049.4" y="326.8" font-size="6.8" fill="#3a3a3a" text-anchor="end">2014B</text>
<text x="1232.3" y="326.8" font-size="6.8" fill="#3a3a3a">23.9%</text>
<rect x="1056.7" y="346.0" width="104.5" height="27.2" fill="#bf5f5a"/>
<text x="1049.4" y="362.1" font-size="6.8" fill="#3a3a3a" text-anchor="end">2013B</text>
<text x="1162.2" y="362.1" font-size="6.8" fill="#3a3a3a">14.3%</text>
<rect x="696.3" y="406.3" width="266.4000000000001" height="140.2" fill="#eaeaf2"/>
<line x1="696.2" y1="406.3" x2="696.2" y2="546.5" stroke="#ffffff" stroke-width="0.9"/>
<text x="696.2" y="558.7" font-size="6.8" fill="#3a3a3a" text-anchor="middle">0</text>
<line x1="731.8000000000001" y1="406.3" x2="731.8000000000001" y2="546.5" stroke="#ffffff" stroke-width="0.9"/>
<text x="731.8000000000001" y="558.7" font-size="6.8" fill="#3a3a3a" text-anchor="middle">2000</text>
<line x1="767.4000000000001" y1="406.3" x2="767.4000000000001" y2="546.5" stroke="#ffffff" stroke-width="0.9"/>
<text x="767.4000000000001" y="558.7" font-size="6.8" fill="#3a3a3a" text-anchor="middle">4000</text>
<line x1="803.0" y1="406.3" x2="803.0" y2="546.5" stroke="#ffffff" stroke-width="0.9"/>
<text x="803.0" y="558.7" font-size="6.8" fill="#3a3a3a" text-anchor="middle">6000</text>
<line x1="838.6" y1="406.3" x2="838.6" y2="546.5" stroke="#ffffff" stroke-width="0.9"/>
<text x="838.6" y="558.7" font-size="6.8" fill="#3a3a3a" text-anchor="middle">8000</text>
<line x1="874.2" y1="406.3" x2="874.2" y2="546.5" stroke="#ffffff" stroke-width="0.9"/>
<text x="874.2" y="558.7" font-size="6.8" fill="#3a3a3a" text-anchor="middle">10000</text>
<line x1="909.8000000000001" y1="406.3" x2="909.8000000000001" y2="546.5" stroke="#ffffff" stroke-width="0.9"/>
<text x="909.8000000000001" y="558.7" font-size="6.8" fill="#3a3a3a" text-anchor="middle">12000</text>
<line x1="945.4000000000001" y1="406.3" x2="945.4000000000001" y2="546.5" stroke="#ffffff" stroke-width="0.9"/>
<text x="945.4000000000001" y="558.7" font-size="6.8" fill="#3a3a3a" text-anchor="middle">14000</text>
<text x="830" y="402.1" font-size="7.4" fill="#333" text-anchor="middle">Gender Countplot</text>
<rect x="696.3" y="412.5" width="254.70000000000005" height="56" fill="#5572a6"/>
<text x="689.5" y="443.0" font-size="6.8" fill="#3a3a3a" text-anchor="end">M</text>
<text x="951.5" y="443.0" font-size="6.8" fill="#3a3a3a">54.9%</text>
<rect x="696.3" y="483.5" width="208.60000000000002" height="56" fill="#d18c5e"/>
<text x="689.5" y="514.0" font-size="6.8" fill="#3a3a3a" text-anchor="end">F</text>
<text x="905.4" y="514.0" font-size="6.8" fill="#3a3a3a">45.1%</text>
<rect x="1056.3" y="406" width="266.9000000000001" height="140.60000000000002" fill="#eaeaf2"/>
<line x1="1056.3" y1="406" x2="1056.3" y2="546.6" stroke="#ffffff" stroke-width="0.9"/>
<text x="1056.3" y="558.3" font-size="6.8" fill="#3a3a3a" text-anchor="middle">0</text>
<line x1="1102.75" y1="406" x2="1102.75" y2="546.6" stroke="#ffffff" stroke-width="0.9"/>
<text x="1102.75" y="558.3" font-size="6.8" fill="#3a3a3a" text-anchor="middle">500</text>
<line x1="1149.2" y1="406" x2="1149.2" y2="546.6" stroke="#ffffff" stroke-width="0.9"/>
<text x="1149.2" y="558.3" font-size="6.8" fill="#3a3a3a" text-anchor="middle">1000</text>
<line x1="1195.65" y1="406" x2="1195.65" y2="546.6" stroke="#ffffff" stroke-width="0.9"/>
<text x="1195.65" y="558.3" font-size="6.8" fill="#3a3a3a" text-anchor="middle">1500</text>
<line x1="1242.1" y1="406" x2="1242.1" y2="546.6" stroke="#ffffff" stroke-width="0.9"/>
<text x="1242.1" y="558.3" font-size="6.8" fill="#3a3a3a" text-anchor="middle">2000</text>
<line x1="1288.55" y1="406" x2="1288.55" y2="546.6" stroke="#ffffff" stroke-width="0.9"/>
<text x="1288.55" y="558.3" font-size="6.8" fill="#3a3a3a" text-anchor="middle">2500</text>
<text x="1189.5" y="402.1" font-size="7.4" fill="#333" text-anchor="middle">Region Countplot</text>
<rect x="1056.3" y="407.70" width="254.6" height="7.6" fill="#f0a1a6"/>
<text x="1049.7" y="413.90" font-size="6.9" fill="#3a3a3a" text-anchor="end">Scotland</text>
<text x="1311.4" y="413.90" font-size="6.5" fill="#3a3a3a">10.4%</text>
<rect x="1056.3" y="418.53" width="251.7" height="7.6" fill="#ec9a5c"/>
<text x="1049.7" y="424.73" font-size="6.9" fill="#3a3a3a" text-anchor="end">East Anglian Region</text>
<text x="1308.5" y="424.73" font-size="6.5" fill="#3a3a3a">10.3%</text>
<rect x="1056.3" y="429.36" width="243.5" height="7.6" fill="#c99c48"/>
<text x="1049.7" y="435.56" font-size="6.9" fill="#3a3a3a" text-anchor="end">London Region</text>
<text x="1300.3" y="435.56" font-size="6.5" fill="#3a3a3a">10.0%</text>
<rect x="1056.3" y="440.19" width="231.4" height="7.6" fill="#a39e45"/>
<text x="1049.7" y="446.39" font-size="6.9" fill="#3a3a3a" text-anchor="end">South Region</text>
<text x="1288.2" y="446.39" font-size="6.5" fill="#3a3a3a">9.5%</text>
<rect x="1056.3" y="451.02" width="219.1" height="7.6" fill="#7aa246"/>
<text x="1049.7" y="457.22" font-size="6.9" fill="#3a3a3a" text-anchor="end">North Western Region</text>
<text x="1275.9" y="457.22" font-size="6.5" fill="#3a3a3a">9.0%</text>
<rect x="1056.3" y="461.85" width="189.5" height="7.6" fill="#4aa56c"/>
<text x="1049.7" y="468.05" font-size="6.9" fill="#3a3a3a" text-anchor="end">West Midlands Region</text>
<text x="1246.3" y="468.05" font-size="6.5" fill="#3a3a3a">7.8%</text>
<rect x="1056.3" y="472.68" width="180.1" height="7.6" fill="#48a591"/>
<text x="1049.7" y="478.88" font-size="6.9" fill="#3a3a3a" text-anchor="end">South West Region</text>
<text x="1236.9" y="478.88" font-size="6.5" fill="#3a3a3a">7.4%</text>
<rect x="1056.3" y="483.51" width="178.4" height="7.6" fill="#47a3a8"/>
<text x="1049.7" y="489.71" font-size="6.9" fill="#3a3a3a" text-anchor="end">East Midlands Region</text>
<text x="1235.2" y="489.71" font-size="6.5" fill="#3a3a3a">7.3%</text>
<rect x="1056.3" y="494.34" width="157.2" height="7.6" fill="#4aa5cf"/>
<text x="1049.7" y="500.54" font-size="6.9" fill="#3a3a3a" text-anchor="end">Wales</text>
<text x="1214.0" y="500.54" font-size="6.5" fill="#3a3a3a">6.4%</text>
<rect x="1056.3" y="505.17" width="155.4" height="7.6" fill="#89abe8"/>
<text x="1049.7" y="511.37" font-size="6.9" fill="#3a3a3a" text-anchor="end">South East Region</text>
<text x="1212.2" y="511.37" font-size="6.5" fill="#3a3a3a">6.4%</text>
<rect x="1056.3" y="516.00" width="150.5" height="7.6" fill="#bca6e8"/>
<text x="1049.7" y="522.20" font-size="6.9" fill="#3a3a3a" text-anchor="end">Yorkshire Region</text>
<text x="1207.3" y="522.20" font-size="6.5" fill="#3a3a3a">6.2%</text>
<rect x="1056.3" y="526.83" width="136.9" height="7.6" fill="#ea9de8"/>
<text x="1049.7" y="533.03" font-size="6.9" fill="#3a3a3a" text-anchor="end">North Region</text>
<text x="1193.7" y="533.03" font-size="6.5" fill="#3a3a3a">5.6%</text>
<rect x="1056.3" y="537.66" width="90.8" height="7.6" fill="#eb9cc3"/>
<text x="1049.7" y="543.86" font-size="6.9" fill="#3a3a3a" text-anchor="end">Ireland</text>
<text x="1147.6" y="543.86" font-size="6.5" fill="#3a3a3a">3.7%</text>
</svg>
<svg class="a" style="left:832px;top:235px" width="10" height="15" viewBox="0 0 12 18"><path d="M1 1V15L4.5 11.5L7 17L9 16L6.5 10.5H11Z" fill="#111" stroke="#fff" stroke-width="1"/></svg>
<svg class="a" style="left:1357px;top:112px" width="126" height="93" viewBox="0 0 126 93" preserveAspectRatio="none"><rect width="126" height="93" fill="#fff"/>
<rect x="6" y="2.5" width="32.5" height="25" fill="#eaeaf2"/>
<g transform="translate(6 2.5)"><path d="M20 25L22 21L25 18L27 14L28.5 10L29 2H30L30.5 12L31 25Z" fill="#5a78b0"/></g>
<rect x="17" y="0.8999999999999999" width="10" height="0.9" fill="#c4c4c4"/>
<rect x="2" y="4.5" width="2.5" height="21" fill="#e2e2e2"/>
<rect x="7" y="28.7" width="30" height="1" fill="#e2e2e2"/>
<rect x="49" y="2.5" width="32.5" height="25" fill="#eaeaf2"/>
<g transform="translate(49 2.5)"><path d="M1 25V19H2.5V25ZM7 25V11H8.5V25ZM9 25V4H10.5V25ZM24 25V14H25.5V25ZM26.5 25V10H28V25ZM30.5 25V2H32V25Z" fill="#5a78b0"/></g>
<rect x="60" y="0.8999999999999999" width="10" height="0.9" fill="#c4c4c4"/>
<rect x="45" y="4.5" width="2.5" height="21" fill="#e2e2e2"/>
<rect x="50" y="28.7" width="30" height="1" fill="#e2e2e2"/>
<rect x="92" y="2.5" width="32.5" height="25" fill="#eaeaf2"/>
<g transform="translate(92 2.5)"><path d="M1 25V2H2.5V25ZM6 25V24H8V25Z" fill="#5a78b0"/></g>
<rect x="103" y="0.8999999999999999" width="10" height="0.9" fill="#c4c4c4"/>
<rect x="88" y="4.5" width="2.5" height="21" fill="#e2e2e2"/>
<rect x="93" y="28.7" width="30" height="1" fill="#e2e2e2"/>
<rect x="6" y="34" width="32.5" height="25" fill="#eaeaf2"/>
<g transform="translate(6 34)"><path d="M1 25V18H2.5V25ZM3 25V2H4.5V25ZM6.5 25V17H8V25Z" fill="#5a78b0"/></g>
<rect x="17" y="32.4" width="10" height="0.9" fill="#c4c4c4"/>
<rect x="2" y="36" width="2.5" height="21" fill="#e2e2e2"/>
<rect x="7" y="60.2" width="30" height="1" fill="#e2e2e2"/>
<rect x="49" y="34" width="32.5" height="25" fill="#eaeaf2"/>
<g transform="translate(49 34)"><path d="M1 25V2H2V12L3 17L5 21L8 24L12 25Z" fill="#5a78b0"/></g>
<rect x="60" y="32.4" width="10" height="0.9" fill="#c4c4c4"/>
<rect x="45" y="36" width="2.5" height="21" fill="#e2e2e2"/>
<rect x="50" y="60.2" width="30" height="1" fill="#e2e2e2"/>
<rect x="92" y="34" width="32.5" height="25" fill="#eaeaf2"/>
<g transform="translate(92 34)"><path d="M0.5 25V4L2 10L4 15L6 17L9 14L14 11L20 8L25 4L28 6L30 14L32 25Z" fill="#5a78b0"/></g>
<rect x="103" y="32.4" width="10" height="0.9" fill="#c4c4c4"/>
<rect x="88" y="36" width="2.5" height="21" fill="#e2e2e2"/>
<rect x="93" y="60.2" width="30" height="1" fill="#e2e2e2"/>
<rect x="6" y="65.5" width="32.5" height="25" fill="#eaeaf2"/>
<g transform="translate(6 65.5)"><path d="M1 25V2H2.5V25ZM14 25V23H19V25ZM27 25V21H28.5V25Z" fill="#5a78b0"/></g>
<rect x="17" y="63.9" width="10" height="0.9" fill="#c4c4c4"/>
<rect x="2" y="67.5" width="2.5" height="21" fill="#e2e2e2"/>
<rect x="7" y="91.7" width="30" height="1" fill="#e2e2e2"/>
<rect x="49" y="65.5" width="32.5" height="25" fill="#eaeaf2"/>
<g transform="translate(49 65.5)"><path d="M1 25V2H2.5V25Z" fill="#5a78b0"/></g>
<rect x="60" y="63.9" width="10" height="0.9" fill="#c4c4c4"/>
<rect x="45" y="67.5" width="2.5" height="21" fill="#e2e2e2"/>
<rect x="50" y="91.7" width="30" height="1" fill="#e2e2e2"/>
</svg>
<svg class="a" style="left:1357px;top:208px" width="126" height="103" viewBox="0 0 126 103"><defs><linearGradient id="cbar" x1="0" y1="0" x2="0" y2="1"><stop offset="0" stop-color="#c0282e"/><stop offset="0.35" stop-color="#f2c9b0"/><stop offset="0.55" stop-color="#c9d6ef"/><stop offset="1" stop-color="#3f5fc8"/></linearGradient></defs><rect width="126" height="103" fill="#fff"/>
<rect x="46.90" y="6.10" width="7.9" height="6.75" fill="#c52a30"/>
<rect x="54.72" y="6.10" width="7.9" height="6.75" fill="#7b9fe9"/>
<rect x="56.32" y="9.10" width="4.5" height="0.7" fill="#dfe6f5" opacity="0.7"/>
<rect x="62.54" y="6.10" width="7.9" height="6.75" fill="#7b9fe9"/>
<rect x="64.14" y="9.10" width="4.5" height="0.7" fill="#dfe6f5" opacity="0.7"/>
<rect x="70.36" y="6.10" width="7.9" height="6.75" fill="#9db9f1"/>
<rect x="71.96" y="9.10" width="4.5" height="0.7" fill="#dfe6f5" opacity="0.7"/>
<rect x="78.18" y="6.10" width="7.9" height="6.75" fill="#7b9fe9"/>
<rect x="79.78" y="9.10" width="4.5" height="0.7" fill="#dfe6f5" opacity="0.7"/>
<rect x="86.00" y="6.10" width="7.9" height="6.75" fill="#7b9fe9"/>
<rect x="87.60" y="9.10" width="4.5" height="0.7" fill="#dfe6f5" opacity="0.7"/>
<rect x="93.82" y="6.10" width="7.9" height="6.75" fill="#7b9fe9"/>
<rect x="95.42" y="9.10" width="4.5" height="0.7" fill="#dfe6f5" opacity="0.7"/>
<rect x="101.64" y="6.10" width="7.9" height="6.75" fill="#7b9fe9"/>
<rect x="103.24" y="9.10" width="4.5" height="0.7" fill="#dfe6f5" opacity="0.7"/>
<rect x="46.90" y="12.79" width="7.9" height="6.75" fill="#7b9fe9"/>
<rect x="48.50" y="15.79" width="4.5" height="0.7" fill="#dfe6f5" opacity="0.7"/>
<rect x="54.72" y="12.79" width="7.9" height="6.75" fill="#c52a30"/>
<rect x="62.54" y="12.79" width="7.9" height="6.75" fill="#9db9f1"/>
<rect x="64.14" y="15.79" width="4.5" height="0.7" fill="#dfe6f5" opacity="0.7"/>
<rect x="70.36" y="12.79" width="7.9" height="6.75" fill="#7b9fe9"/>
<rect x="71.96" y="15.79" width="4.5" height="0.7" fill="#dfe6f5" opacity="0.7"/>
<rect x="78.18" y="12.79" width="7.9" height="6.75" fill="#7b9fe9"/>
<rect x="79.78" y="15.79" width="4.5" height="0.7" fill="#dfe6f5" opacity="0.7"/>
<rect x="86.00" y="12.79" width="7.9" height="6.75" fill="#7b9fe9"/>
<rect x="87.60" y="15.79" width="4.5" height="0.7" fill="#dfe6f5" opacity="0.7"/>
<rect x="93.82" y="12.79" width="7.9" height="6.75" fill="#7b9fe9"/>
<rect x="95.42" y="15.79" width="4.5" height="0.7" fill="#dfe6f5" opacity="0.7"/>
<rect x="101.64" y="12.79" width="7.9" height="6.75" fill="#7b9fe9"/>
<rect x="103.24" y="15.79" width="4.5" height="0.7" fill="#dfe6f5" opacity="0.7"/>
<rect x="46.90" y="19.48" width="7.9" height="6.75" fill="#7b9fe9"/>
<rect x="48.50" y="22.48" width="4.5" height="0.7" fill="#dfe6f5" opacity="0.7"/>
<rect x="54.72" y="19.48" width="7.9" height="6.75" fill="#9db9f1"/>
<rect x="56.32" y="22.48" width="4.5" height="0.7" fill="#dfe6f5" opacity="0.7"/>
<rect x="62.54" y="19.48" width="7.9" height="6.75" fill="#c52a30"/>
<rect x="70.36" y="19.48" width="7.9" height="6.75" fill="#c4d3f0"/>
<rect x="71.96" y="22.48" width="4.5" height="0.7" fill="#dfe6f5" opacity="0.7"/>
<rect x="78.18" y="19.48" width="7.9" height="6.75" fill="#7b9fe9"/>
<rect x="79.78" y="22.48" width="4.5" height="0.7" fill="#dfe6f5" opacity="0.7"/>
<rect x="86.00" y="19.48" width="7.9" height="6.75" fill="#9db9f1"/>
<rect x="87.60" y="22.48" width="4.5" height="0.7" fill="#dfe6f5" opacity="0.7"/>
<rect x="93.82" y="19.48" width="7.9" height="6.75" fill="#7b9fe9"/>
<rect x="95.42" y="22.48" width="4.5" height="0.7" fill="#dfe6f5" opacity="0.7"/>
<rect x="101.64" y="19.48" width="7.9" height="6.75" fill="#7b9fe9"/>
<rect x="103.24" y="22.48" width="4.5" height="0.7" fill="#dfe6f5" opacity="0.7"/>
<rect x="46.90" y="26.17" width="7.9" height="6.75" fill="#9db9f1"/>
<rect x="48.50" y="29.17" width="4.5" height="0.7" fill="#dfe6f5" opacity="0.7"/>
<rect x="54.72" y="26.17" width="7.9" height="6.75" fill="#7b9fe9"/>
<rect x="56.32" y="29.17" width="4.5" height="0.7" fill="#dfe6f5" opacity="0.7"/>
<rect x="62.54" y="26.17" width="7.9" height="6.75" fill="#c4d3f0"/>
<rect x="64.14" y="29.17" width="4.5" height="0.7" fill="#dfe6f5" opacity="0.7"/>
<rect x="70.36" y="26.17" width="7.9" height="6.75" fill="#c52a30"/>
<rect x="78.18" y="26.17" width="7.9" height="6.75" fill="#9db9f1"/>
<rect x="79.78" y="29.17" width="4.5" height="0.7" fill="#dfe6f5" opacity="0.7"/>
<rect x="86.00" y="26.17" width="7.9" height="6.75" fill="#7b9fe9"/>
<rect x="87.60" y="29.17" width="4.5" height="0.7" fill="#dfe6f5" opacity="0.7"/>
<rect x="93.82" y="26.17" width="7.9" height="6.75" fill="#7b9fe9"/>
<rect x="95.42" y="29.17" width="4.5" height="0.7" fill="#dfe6f5" opacity="0.7"/>
<rect x="101.64" y="26.17" width="7.9" height="6.75" fill="#7b9fe9"/>
<rect x="103.24" y="29.17" width="4.5" height="0.7" fill="#dfe6f5" opacity="0.7"/>
<rect x="46.90" y="32.86" width="7.9" height="6.75" fill="#7b9fe9"/>
<rect x="48.50" y="35.86" width="4.5" height="0.7" fill="#dfe6f5" opacity="0.7"/>
<rect x="54.72" y="32.86" width="7.9" height="6.75" fill="#7b9fe9"/>
<rect x="56.32" y="35.86" width="4.5" height="0.7" fill="#dfe6f5" opacity="0.7"/>
<rect x="62.54" y="32.86" width="7.9" height="6.75" fill="#7b9fe9"/>
<rect x="64.14" y="35.86" width="4.5" height="0.7" fill="#dfe6f5" opacity="0.7"/>
<rect x="70.36" y="32.86" width="7.9" height="6.75" fill="#7b9fe9"/>
<rect x="71.96" y="35.86" width="4.5" height="0.7" fill="#dfe6f5" opacity="0.7"/>
<rect x="78.18" y="32.86" width="7.9" height="6.75" fill="#c52a30"/>
<rect x="86.00" y="32.86" width="7.9" height="6.75" fill="#f1cdb6"/>
<rect x="93.82" y="32.86" width="7.9" height="6.75" fill="#7b9fe9"/>
<rect x="95.42" y="35.86" width="4.5" height="0.7" fill="#dfe6f5" opacity="0.7"/>
<rect x="101.64" y="32.86" width="7.9" height="6.75" fill="#7b9fe9"/>
<rect x="103.24" y="35.86" width="4.5" height="0.7" fill="#dfe6f5" opacity="0.7"/>
<rect x="46.90" y="39.55" width="7.9" height="6.75" fill="#7b9fe9"/>
<rect x="48.50" y="42.55" width="4.5" height="0.7" fill="#dfe6f5" opacity="0.7"/>
<rect x="54.72" y="39.55" width="7.9" height="6.75" fill="#7b9fe9"/>
<rect x="56.32" y="42.55" width="4.5" height="0.7" fill="#dfe6f5" opacity="0.7"/>
<rect x="62.54" y="39.55" width="7.9" height="6.75" fill="#9db9f1"/>
<rect x="64.14" y="42.55" width="4.5" height="0.7" fill="#dfe6f5" opacity="0.7"/>
<rect x="70.36" y="39.55" width="7.9" height="6.75" fill="#9db9f1"/>
<rect x="71.96" y="42.55" width="4.5" height="0.7" fill="#dfe6f5" opacity="0.7"/>
<rect x="78.18" y="39.55" width="7.9" height="6.75" fill="#f1cdb6"/>
<rect x="86.00" y="39.55" width="7.9" height="6.75" fill="#c52a30"/>
<rect x="93.82" y="39.55" width="7.9" height="6.75" fill="#7b9fe9"/>
<rect x="95.42" y="42.55" width="4.5" height="0.7" fill="#dfe6f5" opacity="0.7"/>
<rect x="101.64" y="39.55" width="7.9" height="6.75" fill="#7b9fe9"/>
<rect x="103.24" y="42.55" width="4.5" height="0.7" fill="#dfe6f5" opacity="0.7"/>
<rect x="46.90" y="46.24" width="7.9" height="6.75" fill="#7b9fe9"/>
<rect x="48.50" y="49.24" width="4.5" height="0.7" fill="#dfe6f5" opacity="0.7"/>
<rect x="54.72" y="46.24" width="7.9" height="6.75" fill="#9db9f1"/>
<rect x="56.32" y="49.24" width="4.5" height="0.7" fill="#dfe6f5" opacity="0.7"/>
<rect x="62.54" y="46.24" width="7.9" height="6.75" fill="#7b9fe9"/>
<rect x="64.14" y="49.24" width="4.5" height="0.7" fill="#dfe6f5" opacity="0.7"/>
<rect x="70.36" y="46.24" width="7.9" height="6.75" fill="#7b9fe9"/>
<rect x="71.96" y="49.24" width="4.5" height="0.7" fill="#dfe6f5" opacity="0.7"/>
<rect x="78.18" y="46.24" width="7.9" height="6.75" fill="#5a7bd9"/>
<rect x="79.78" y="49.24" width="4.5" height="0.7" fill="#dfe6f5" opacity="0.7"/>
<rect x="86.00" y="46.24" width="7.9" height="6.75" fill="#5a7bd9"/>
<rect x="87.60" y="49.24" width="4.5" height="0.7" fill="#dfe6f5" opacity="0.7"/>
<rect x="93.82" y="46.24" width="7.9" height="6.75" fill="#c52a30"/>
<rect x="101.64" y="46.24" width="7.9" height="6.75" fill="#7b9fe9"/>
<rect x="103.24" y="49.24" width="4.5" height="0.7" fill="#dfe6f5" opacity="0.7"/>
<rect x="46.90" y="52.93" width="7.9" height="6.75" fill="#7b9fe9"/>
<rect x="48.50" y="55.93" width="4.5" height="0.7" fill="#dfe6f5" opacity="0.7"/>
<rect x="54.72" y="52.93" width="7.9" height="6.75" fill="#7b9fe9"/>
<rect x="56.32" y="55.93" width="4.5" height="0.7" fill="#dfe6f5" opacity="0.7"/>
<rect x="62.54" y="52.93" width="7.9" height="6.75" fill="#7b9fe9"/>
<rect x="64.14" y="55.93" width="4.5" height="0.7" fill="#dfe6f5" opacity="0.7"/>
<rect x="70.36" y="52.93" width="7.9" height="6.75" fill="#7b9fe9"/>
<rect x="71.96" y="55.93" width="4.5" height="0.7" fill="#dfe6f5" opacity="0.7"/>
<rect x="78.18" y="52.93" width="7.9" height="6.75" fill="#5a7bd9"/>
<rect x="79.78" y="55.93" width="4.5" height="0.7" fill="#dfe6f5" opacity="0.7"/>
<rect x="86.00" y="52.93" width="7.9" height="6.75" fill="#4363c8"/>
<rect x="87.60" y="55.93" width="4.5" height="0.7" fill="#dfe6f5" opacity="0.7"/>
<rect x="93.82" y="52.93" width="7.9" height="6.75" fill="#7b9fe9"/>
<rect x="95.42" y="55.93" width="4.5" height="0.7" fill="#dfe6f5" opacity="0.7"/>
<rect x="101.64" y="52.93" width="7.9" height="6.75" fill="#c4d3f0"/>
<rect x="103.24" y="55.93" width="4.5" height="0.7" fill="#dfe6f5" opacity="0.7"/>
<rect x="115.8" y="5.5" width="2.6" height="54" fill="url(#cbar)"/>
<rect x="60.6" y="2.4" width="30.6" height="1" fill="#8a8a8a"/>
<rect x="30.5" y="9.10" width="14" height="1" fill="#aaaaaa"/>
<rect x="6.5" y="15.79" width="38" height="1" fill="#aaaaaa"/>
<rect x="14.5" y="22.48" width="30" height="1" fill="#aaaaaa"/>
<rect x="26.5" y="29.17" width="18" height="1" fill="#aaaaaa"/>
<rect x="34.5" y="35.86" width="10" height="1" fill="#aaaaaa"/>
<rect x="28.5" y="42.55" width="16" height="1" fill="#aaaaaa"/>
<rect x="36.5" y="49.24" width="8" height="1" fill="#aaaaaa"/>
<rect x="36.5" y="55.93" width="8" height="1" fill="#aaaaaa"/>
<rect x="46.2" y="62.2" width="1" height="23.5" fill="#aaaaaa"/>
<rect x="56.3" y="62.2" width="1" height="39.1" fill="#aaaaaa"/>
<rect x="65.5" y="62.2" width="1" height="31.3" fill="#aaaaaa"/>
<rect x="75.3" y="62.2" width="1" height="23.5" fill="#aaaaaa"/>
<rect x="84.4" y="62.2" width="1" height="13.0" fill="#aaaaaa"/>
<rect x="94.5" y="62.2" width="1" height="11.7" fill="#aaaaaa"/>
<rect x="104.6" y="62.2" width="1" height="10.4" fill="#aaaaaa"/>
</svg>
<div class="a" style="left:1357px;top:314px;width:126px;height:64px;background:#1a86d0"></div>
<svg class="a" style="left:1359px;top:316px" width="122" height="61" viewBox="669 223 668 340" preserveAspectRatio="none" font-family="Liberation Sans"><rect x="669" y="223" width="668" height="340" fill="#ffffff"/>
<rect x="696" y="237" width="267" height="140" fill="#eaeaf2"/>
<line x1="695.8" y1="237" x2="695.8" y2="377" stroke="#ffffff" stroke-width="0.9"/>
<text x="695.8" y="388.5" font-size="6.8" fill="#3a3a3a" text-anchor="middle">0</text>
<line x1="736.0" y1="237" x2="736.0" y2="377" stroke="#ffffff" stroke-width="0.9"/>
<text x="736.0" y="388.5" font-size="6.8" fill="#3a3a3a" text-anchor="middle">1000</text>
<line x1="776.1999999999999" y1="237" x2="776.1999999999999" y2="377" stroke="#ffffff" stroke-width="0.9"/>
<text x="776.1999999999999" y="388.5" font-size="6.8" fill="#3a3a3a" text-anchor="middle">2000</text>
<line x1="816.4" y1="237" x2="816.4" y2="377" stroke="#ffffff" stroke-width="0.9"/>
<text x="816.4" y="388.5" font-size="6.8" fill="#3a3a3a" text-anchor="middle">3000</text>
<line x1="856.5999999999999" y1="237" x2="856.5999999999999" y2="377" stroke="#ffffff" stroke-width="0.9"/>
<text x="856.5999999999999" y="388.5" font-size="6.8" fill="#3a3a3a" text-anchor="middle">4000</text>
<line x1="896.8" y1="237" x2="896.8" y2="377" stroke="#ffffff" stroke-width="0.9"/>
<text x="896.8" y="388.5" font-size="6.8" fill="#3a3a3a" text-anchor="middle">5000</text>
<line x1="937.0" y1="237" x2="937.0" y2="377" stroke="#ffffff" stroke-width="0.9"/>
<text x="937.0" y="388.5" font-size="6.8" fill="#3a3a3a" text-anchor="middle">6000</text>
<text x="830" y="232.1" font-size="7.4" fill="#333" text-anchor="middle">Code_module Countplot</text>
<rect x="696" y="238.2" width="255" height="14.8" fill="#5572a6"/>
<text x="689.5" y="248.1" font-size="6.8" fill="#3a3a3a" text-anchor="end">BBB</text>
<text x="951.5" y="248.1" font-size="6.8" fill="#3a3a3a">24.3%</text>
<rect x="696" y="258.40000000000003" width="249.70000000000005" height="14.8" fill="#d18c5e"/>
<text x="689.5" y="268.3" font-size="6.8" fill="#3a3a3a" text-anchor="end">FFF</text>
<text x="946.2" y="268.3" font-size="6.8" fill="#3a3a3a">23.8%</text>
<rect x="696" y="278.8" width="201.39999999999998" height="14.8" fill="#589a6a"/>
<text x="689.5" y="288.7" font-size="6.8" fill="#3a3a3a" text-anchor="end">DDD</text>
<text x="897.9" y="288.7" font-size="6.8" fill="#3a3a3a">19.2%</text>
<rect x="696" y="298.90000000000003" width="142.5" height="14.8" fill="#bf5f5a"/>
<text x="689.5" y="308.8" font-size="6.8" fill="#3a3a3a" text-anchor="end">CCC</text>
<text x="839.0" y="308.8" font-size="6.8" fill="#3a3a3a">13.6%</text>
<rect x="696" y="319.1" width="94" height="14.8" fill="#8479ab"/>
<text x="689.5" y="329.0" font-size="6.8" fill="#3a3a3a" text-anchor="end">EEE</text>
<text x="790.5" y="329.0" font-size="6.8" fill="#3a3a3a">9.0%</text>
<rect x="696" y="339.1" width="81" height="14.8" fill="#8e7864"/>
<text x="689.5" y="349.0" font-size="6.8" fill="#3a3a3a" text-anchor="end">GGG</text>
<text x="777.5" y="349.0" font-size="6.8" fill="#3a3a3a">7.8%</text>
<rect x="696" y="359.1" width="23.399999999999977" height="14.8" fill="#d99ac6"/>
<text x="689.5" y="369.0" font-size="6.8" fill="#3a3a3a" text-anchor="end">AAA</text>
<text x="719.9" y="369.0" font-size="6.8" fill="#3a3a3a">2.3%</text>
<rect x="1056.7" y="237" width="266.29999999999995" height="140" fill="#eaeaf2"/>
<line x1="1056.7" y1="237" x2="1056.7" y2="377" stroke="#ffffff" stroke-width="0.9"/>
<text x="1056.7" y="388.5" font-size="6.8" fill="#3a3a3a" text-anchor="middle">0</text>
<line x1="1112.9" y1="237" x2="1112.9" y2="377" stroke="#ffffff" stroke-width="0.9"/>
<text x="1112.9" y="388.5" font-size="6.8" fill="#3a3a3a" text-anchor="middle">2000</text>
<line x1="1169.1000000000001" y1="237" x2="1169.1000000000001" y2="377" stroke="#ffffff" stroke-width="0.9"/>
<text x="1169.1000000000001" y="388.5" font-size="6.8" fill="#3a3a3a" text-anchor="middle">4000</text>
<line x1="1225.3000000000002" y1="237" x2="1225.3000000000002" y2="377" stroke="#ffffff" stroke-width="0.9"/>
<text x="1225.3000000000002" y="388.5" font-size="6.8" fill="#3a3a3a" text-anchor="middle">6000</text>
<line x1="1281.5" y1="237" x2="1281.5" y2="377" stroke="#ffffff" stroke-width="0.9"/>
<text x="1281.5" y="388.5" font-size="6.8" fill="#3a3a3a" text-anchor="middle">8000</text>
<text x="1190" y="232.1" font-size="7.4" fill="#333" text-anchor="middle">Code_presentation Countplot</text>
<rect x="1056.7" y="239.4" width="254.29999999999995" height="27.2" fill="#5572a6"/>
<text x="1049.4" y="255.5" font-size="6.8" fill="#3a3a3a" text-anchor="end">2014J</text>
<text x="1312" y="255.5" font-size="6.8" fill="#3a3a3a">34.7%</text>
<rect x="1056.7" y="275.2" width="198.29999999999995" height="27.2" fill="#d18c5e"/>
<text x="1049.4" y="291.3" font-size="6.8" fill="#3a3a3a" text-anchor="end">2013J</text>
<text x="1256" y="291.3" font-size="6.8" fill="#3a3a3a">27.1%</text>
<rect x="1056.7" y="310.7" width="174.5999999999999" height="27.2" fill="#589a6a"/>
<text x="1049.4" y="326.8" font-size="6.8" fill="#3a3a3a" text-anchor="end">2014B</text>
<text x="1232.3" y="326.8" font-size="6.8" fill="#3a3a3a">23.9%</text>
<rect x="1056.7" y="346.0" width="104.5" height="27.2" fill="#bf5f5a"/>
<text x="1049.4" y="362.1" font-size="6.8" fill="#3a3a3a" text-anchor="end">2013B</text>
<text x="1162.2" y="362.1" font-size="6.8" fill="#3a3a3a">14.3%</text>
<rect x="696.3" y="406.3" width="266.4000000000001" height="140.2" fill="#eaeaf2"/>
<line x1="696.2" y1="406.3" x2="696.2" y2="546.5" stroke="#ffffff" stroke-width="0.9"/>
<text x="696.2" y="558.7" font-size="6.8" fill="#3a3a3a" text-anchor="middle">0</text>
<line x1="731.8000000000001" y1="406.3" x2="731.8000000000001" y2="546.5" stroke="#ffffff" stroke-width="0.9"/>
<text x="731.8000000000001" y="558.7" font-size="6.8" fill="#3a3a3a" text-anchor="middle">2000</text>
<line x1="767.4000000000001" y1="406.3" x2="767.4000000000001" y2="546.5" stroke="#ffffff" stroke-width="0.9"/>
<text x="767.4000000000001" y="558.7" font-size="6.8" fill="#3a3a3a" text-anchor="middle">4000</text>
<line x1="803.0" y1="406.3" x2="803.0" y2="546.5" stroke="#ffffff" stroke-width="0.9"/>
<text x="803.0" y="558.7" font-size="6.8" fill="#3a3a3a" text-anchor="middle">6000</text>
<line x1="838.6" y1="406.3" x2="838.6" y2="546.5" stroke="#ffffff" stroke-width="0.9"/>
<text x="838.6" y="558.7" font-size="6.8" fill="#3a3a3a" text-anchor="middle">8000</text>
<line x1="874.2" y1="406.3" x2="874.2" y2="546.5" stroke="#ffffff" stroke-width="0.9"/>
<text x="874.2" y="558.7" font-size="6.8" fill="#3a3a3a" text-anchor="middle">10000</text>
<line x1="909.8000000000001" y1="406.3" x2="909.8000000000001" y2="546.5" stroke="#ffffff" stroke-width="0.9"/>
<text x="909.8000000000001" y="558.7" font-size="6.8" fill="#3a3a3a" text-anchor="middle">12000</text>
<line x1="945.4000000000001" y1="406.3" x2="945.4000000000001" y2="546.5" stroke="#ffffff" stroke-width="0.9"/>
<text x="945.4000000000001" y="558.7" font-size="6.8" fill="#3a3a3a" text-anchor="middle">14000</text>
<text x="830" y="402.1" font-size="7.4" fill="#333" text-anchor="middle">Gender Countplot</text>
<rect x="696.3" y="412.5" width="254.70000000000005" height="56" fill="#5572a6"/>
<text x="689.5" y="443.0" font-size="6.8" fill="#3a3a3a" text-anchor="end">M</text>
<text x="951.5" y="443.0" font-size="6.8" fill="#3a3a3a">54.9%</text>
<rect x="696.3" y="483.5" width="208.60000000000002" height="56" fill="#d18c5e"/>
<text x="689.5" y="514.0" font-size="6.8" fill="#3a3a3a" text-anchor="end">F</text>
<text x="905.4" y="514.0" font-size="6.8" fill="#3a3a3a">45.1%</text>
<rect x="1056.3" y="406" width="266.9000000000001" height="140.60000000000002" fill="#eaeaf2"/>
<line x1="1056.3" y1="406" x2="1056.3" y2="546.6" stroke="#ffffff" stroke-width="0.9"/>
<text x="1056.3" y="558.3" font-size="6.8" fill="#3a3a3a" text-anchor="middle">0</text>
<line x1="1102.75" y1="406" x2="1102.75" y2="546.6" stroke="#ffffff" stroke-width="0.9"/>
<text x="1102.75" y="558.3" font-size="6.8" fill="#3a3a3a" text-anchor="middle">500</text>
<line x1="1149.2" y1="406" x2="1149.2" y2="546.6" stroke="#ffffff" stroke-width="0.9"/>
<text x="1149.2" y="558.3" font-size="6.8" fill="#3a3a3a" text-anchor="middle">1000</text>
<line x1="1195.65" y1="406" x2="1195.65" y2="546.6" stroke="#ffffff" stroke-width="0.9"/>
<text x="1195.65" y="558.3" font-size="6.8" fill="#3a3a3a" text-anchor="middle">1500</text>
<line x1="1242.1" y1="406" x2="1242.1" y2="546.6" stroke="#ffffff" stroke-width="0.9"/>
<text x="1242.1" y="558.3" font-size="6.8" fill="#3a3a3a" text-anchor="middle">2000</text>
<line x1="1288.55" y1="406" x2="1288.55" y2="546.6" stroke="#ffffff" stroke-width="0.9"/>
<text x="1288.55" y="558.3" font-size="6.8" fill="#3a3a3a" text-anchor="middle">2500</text>
<text x="1189.5" y="402.1" font-size="7.4" fill="#333" text-anchor="middle">Region Countplot</text>
<rect x="1056.3" y="407.70" width="254.6" height="7.6" fill="#f0a1a6"/>
<text x="1049.7" y="413.90" font-size="6.9" fill="#3a3a3a" text-anchor="end">Scotland</text>
<text x="1311.4" y="413.90" font-size="6.5" fill="#3a3a3a">10.4%</text>
<rect x="1056.3" y="418.53" width="251.7" height="7.6" fill="#ec9a5c"/>
<text x="1049.7" y="424.73" font-size="6.9" fill="#3a3a3a" text-anchor="end">East Anglian Region</text>
<text x="1308.5" y="424.73" font-size="6.5" fill="#3a3a3a">10.3%</text>
<rect x="1056.3" y="429.36" width="243.5" height="7.6" fill="#c99c48"/>
<text x="1049.7" y="435.56" font-size="6.9" fill="#3a3a3a" text-anchor="end">London Region</text>
<text x="1300.3" y="435.56" font-size="6.5" fill="#3a3a3a">10.0%</text>
<rect x="1056.3" y="440.19" width="231.4" height="7.6" fill="#a39e45"/>
<text x="1049.7" y="446.39" font-size="6.9" fill="#3a3a3a" text-anchor="end">South Region</text>
<text x="1288.2" y="446.39" font-size="6.5" fill="#3a3a3a">9.5%</text>
<rect x="1056.3" y="451.02" width="219.1" height="7.6" fill="#7aa246"/>
<text x="1049.7" y="457.22" font-size="6.9" fill="#3a3a3a" text-anchor="end">North Western Region</text>
<text x="1275.9" y="457.22" font-size="6.5" fill="#3a3a3a">9.0%</text>
<rect x="1056.3" y="461.85" width="189.5" height="7.6" fill="#4aa56c"/>
<text x="1049.7" y="468.05" font-size="6.9" fill="#3a3a3a" text-anchor="end">West Midlands Region</text>
<text x="1246.3" y="468.05" font-size="6.5" fill="#3a3a3a">7.8%</text>
<rect x="1056.3" y="472.68" width="180.1" height="7.6" fill="#48a591"/>
<text x="1049.7" y="478.88" font-size="6.9" fill="#3a3a3a" text-anchor="end">South West Region</text>
<text x="1236.9" y="478.88" font-size="6.5" fill="#3a3a3a">7.4%</text>
<rect x="1056.3" y="483.51" width="178.4" height="7.6" fill="#47a3a8"/>
<text x="1049.7" y="489.71" font-size="6.9" fill="#3a3a3a" text-anchor="end">East Midlands Region</text>
<text x="1235.2" y="489.71" font-size="6.5" fill="#3a3a3a">7.3%</text>
<rect x="1056.3" y="494.34" width="157.2" height="7.6" fill="#4aa5cf"/>
<text x="1049.7" y="500.54" font-size="6.9" fill="#3a3a3a" text-anchor="end">Wales</text>
<text x="1214.0" y="500.54" font-size="6.5" fill="#3a3a3a">6.4%</text>
<rect x="1056.3" y="505.17" width="155.4" height="7.6" fill="#89abe8"/>
<text x="1049.7" y="511.37" font-size="6.9" fill="#3a3a3a" text-anchor="end">South East Region</text>
<text x="1212.2" y="511.37" font-size="6.5" fill="#3a3a3a">6.4%</text>
<rect x="1056.3" y="516.00" width="150.5" height="7.6" fill="#bca6e8"/>
<text x="1049.7" y="522.20" font-size="6.9" fill="#3a3a3a" text-anchor="end">Yorkshire Region</text>
<text x="1207.3" y="522.20" font-size="6.5" fill="#3a3a3a">6.2%</text>
<rect x="1056.3" y="526.83" width="136.9" height="7.6" fill="#ea9de8"/>
<text x="1049.7" y="533.03" font-size="6.9" fill="#3a3a3a" text-anchor="end">North Region</text>
<text x="1193.7" y="533.03" font-size="6.5" fill="#3a3a3a">5.6%</text>
<rect x="1056.3" y="537.66" width="90.8" height="7.6" fill="#eb9cc3"/>
<text x="1049.7" y="543.86" font-size="6.9" fill="#3a3a3a" text-anchor="end">Ireland</text>
<text x="1147.6" y="543.86" font-size="6.5" fill="#3a3a3a">3.7%</text></svg>
<svg class="a" style="left:1357px;top:382px" width="126" height="64" viewBox="0 0 126 64"><rect width="126" height="64" fill="#fff"/>
<rect x="17.7" y="2.8" width="47.7" height="26.1" fill="#eaeaf2"/><rect x="75.6" y="2.8" width="47.7" height="26.1" fill="#eaeaf2"/><rect x="17.7" y="35" width="47.7" height="25.7" fill="#eaeaf2"/><rect x="75.6" y="35" width="47.7" height="25.7" fill="#eaeaf2"/>
<rect x="17.7" y="3.25" width="45.5" height="3.7" fill="#5572a6"/>
<rect x="0.6999999999999993" y="4.7" width="15" height="0.8" fill="#c0c0c0"/>
<rect x="17.7" y="8.85" width="43.3" height="3.7" fill="#d18c5e"/>
<rect x="3.6999999999999993" y="10.3" width="12" height="0.8" fill="#c0c0c0"/>
<rect x="17.7" y="14.25" width="16.1" height="3.7" fill="#589a6a"/>
<rect x="5.699999999999999" y="15.7" width="10" height="0.8" fill="#c0c0c0"/>
<rect x="17.7" y="19.75" width="1.9" height="3.7" fill="#bf5f5a"/>
<rect x="5.699999999999999" y="21.2" width="10" height="0.8" fill="#c0c0c0"/>
<rect x="17.7" y="25.15" width="1.4" height="3.7" fill="#8479ab"/>
<rect x="-0.3000000000000007" y="26.6" width="16" height="0.8" fill="#c0c0c0"/>
<rect x="75.6" y="2.95" width="45.4" height="2.1" fill="#5572a6"/>
<rect x="69" y="3.70" width="5" height="0.7" fill="#c8c8c8"/>
<rect x="75.6" y="5.61" width="38.8" height="2.1" fill="#d18c5e"/>
<rect x="69" y="6.36" width="5" height="0.7" fill="#c8c8c8"/>
<rect x="75.6" y="8.27" width="38.8" height="2.1" fill="#589a6a"/>
<rect x="69" y="9.02" width="5" height="0.7" fill="#c8c8c8"/>
<rect x="75.6" y="10.93" width="38.3" height="2.1" fill="#bf5f5a"/>
<rect x="69" y="11.68" width="5" height="0.7" fill="#c8c8c8"/>
<rect x="75.6" y="13.59" width="34.6" height="2.1" fill="#8479ab"/>
<rect x="69" y="14.34" width="5" height="0.7" fill="#c8c8c8"/>
<rect x="75.6" y="16.25" width="33.2" height="2.1" fill="#8e7864"/>
<rect x="69" y="17.00" width="5" height="0.7" fill="#c8c8c8"/>
<rect x="75.6" y="18.91" width="31.3" height="2.1" fill="#d99ac6"/>
<rect x="69" y="19.66" width="5" height="0.7" fill="#c8c8c8"/>
<rect x="75.6" y="21.57" width="30.4" height="2.1" fill="#8c8c8c"/>
<rect x="69" y="22.32" width="5" height="0.7" fill="#c8c8c8"/>
<rect x="75.6" y="24.23" width="29.9" height="2.1" fill="#c8b775"/>
<rect x="69" y="24.98" width="5" height="0.7" fill="#c8c8c8"/>
<rect x="75.6" y="26.89" width="27.1" height="2.1" fill="#6cb3cb"/>
<rect x="69" y="27.64" width="5" height="0.7" fill="#c8c8c8"/>
<rect x="17.7" y="35.5" width="45.5" height="6.5" fill="#5572a6"/><rect x="17.7" y="44.4" width="19.2" height="6.5" fill="#d18c5e"/><rect x="17.7" y="55.5" width="1.5" height="1.5" fill="#bf5f5a"/>
<rect x="75.6" y="35.5" width="45.4" height="10.3" fill="#5572a6"/><rect x="75.6" y="49" width="4.7" height="10.8" fill="#d18c5e"/>
<rect x="40" y="0.6" width="17" height="0.8" fill="#c8c8c8"/><rect x="92" y="0.6" width="12" height="0.8" fill="#c8c8c8"/><rect x="35" y="32.5" width="13" height="0.8" fill="#c8c8c8"/><rect x="92" y="32.5" width="12" height="0.8" fill="#c8c8c8"/>
</svg>
<svg class="a" style="left:1357px;top:450px" width="126" height="126" viewBox="0 0 126 126"><rect width="126" height="126" fill="#fff"/>
<rect x="6.5" y="0.5" width="13.8" height="14.1" fill="#eaeaf2"/>
<path d="M10.5 13.0L16.5 3.5V13.0Z" fill="#6f8ec4" opacity="0.9"/>
<rect x="21.2" y="0.5" width="13.8" height="14.1" fill="#eaeaf2"/>
<rect x="22.8" y="1.5" width="1.3" height="12" fill="#6f8ec4" opacity="0.85"/><rect x="30.8" y="1.5" width="1.3" height="12" fill="#6f8ec4" opacity="0.85"/>
<rect x="36.0" y="0.5" width="13.8" height="14.1" fill="#eaeaf2"/>
<rect x="37.0" y="1.5" width="0.8" height="12" fill="#6f8ec4" opacity="0.4"/><rect x="40.0" y="1.5" width="0.8" height="12" fill="#6f8ec4" opacity="0.4"/>
<rect x="50.8" y="0.5" width="13.8" height="14.1" fill="#eaeaf2"/>
<rect x="52.2" y="2.0" width="11" height="7" fill="#6f8ec4" opacity="0.8"/>
<rect x="65.5" y="0.5" width="13.8" height="14.1" fill="#eaeaf2"/>
<path d="M66.5 2.0L78.0 5.5L67.5 13.0Z" fill="#6f8ec4" opacity="0.8"/>
<rect x="80.2" y="0.5" width="13.8" height="14.1" fill="#eaeaf2"/>
<rect x="81.8" y="2.0" width="11" height="11" fill="#6f8ec4" opacity="0.8"/>
<rect x="95.0" y="0.5" width="13.8" height="14.1" fill="#eaeaf2"/>
<rect x="96.5" y="2.0" width="11" height="11" fill="#6f8ec4" opacity="0.8"/>
<rect x="109.8" y="0.5" width="13.8" height="14.1" fill="#eaeaf2"/>
<rect x="111.2" y="2.0" width="11" height="7" fill="#6f8ec4" opacity="0.8"/>
<rect x="6.5" y="15.6" width="13.8" height="14.1" fill="#eaeaf2"/>
<rect x="7.5" y="17.1" width="12" height="2.5" fill="#6f8ec4" opacity="0.8"/><rect x="7.5" y="25.6" width="12" height="2.5" fill="#6f8ec4" opacity="0.8"/>
<rect x="21.2" y="15.6" width="13.8" height="14.1" fill="#eaeaf2"/>
<rect x="23.2" y="23.6" width="2" height="5" fill="#6f8ec4"/><rect x="30.2" y="24.6" width="2" height="4" fill="#6f8ec4"/>
<rect x="36.0" y="15.6" width="13.8" height="14.1" fill="#eaeaf2"/>
<rect x="37.0" y="16.6" width="0.8" height="12" fill="#6f8ec4" opacity="0.4"/><rect x="40.0" y="16.6" width="0.8" height="12" fill="#6f8ec4" opacity="0.4"/>
<rect x="50.8" y="15.6" width="13.8" height="14.1" fill="#eaeaf2"/>
<rect x="51.8" y="17.1" width="12" height="2.5" fill="#6f8ec4" opacity="0.8"/><rect x="51.8" y="25.6" width="12" height="2.5" fill="#6f8ec4" opacity="0.8"/>
<rect x="65.5" y="15.6" width="13.8" height="14.1" fill="#eaeaf2"/>
<rect x="66.5" y="17.1" width="12" height="2.5" fill="#6f8ec4" opacity="0.8"/><rect x="66.5" y="25.6" width="12" height="2.5" fill="#6f8ec4" opacity="0.8"/>
<rect x="80.2" y="15.6" width="13.8" height="14.1" fill="#eaeaf2"/>
<rect x="81.2" y="17.1" width="12" height="2.5" fill="#6f8ec4" opacity="0.8"/><rect x="81.2" y="25.6" width="12" height="2.5" fill="#6f8ec4" opacity="0.8"/>
<rect x="95.0" y="15.6" width="13.8" height="14.1" fill="#eaeaf2"/>
<rect x="96.0" y="17.1" width="12" height="2.5" fill="#6f8ec4" opacity="0.8"/><rect x="96.0" y="25.6" width="12" height="2.5" fill="#6f8ec4" opacity="0.8"/>
<rect x="109.8" y="15.6" width="13.8" height="14.1" fill="#eaeaf2"/>
<rect x="110.8" y="17.1" width="12" height="2.5" fill="#6f8ec4" opacity="0.8"/><rect x="110.8" y="25.6" width="12" height="2.5" fill="#6f8ec4" opacity="0.8"/>
<rect x="6.5" y="30.6" width="13.8" height="14.1" fill="#eaeaf2"/>
<rect x="7.5" y="35.6" width="12" height="1" fill="#6f8ec4" opacity="0.5"/><rect x="7.5" y="38.6" width="12" height="1" fill="#6f8ec4" opacity="0.5"/><rect x="7.5" y="41.6" width="12" height="1.5" fill="#6f8ec4" opacity="0.5"/>
<rect x="21.2" y="30.6" width="13.8" height="14.1" fill="#eaeaf2"/>
<rect x="22.2" y="31.6" width="0.8" height="12" fill="#6f8ec4" opacity="0.4"/><rect x="25.2" y="31.6" width="0.8" height="12" fill="#6f8ec4" opacity="0.4"/>
<rect x="36.0" y="30.6" width="13.8" height="14.1" fill="#eaeaf2"/>
<rect x="37.0" y="31.6" width="0.8" height="12" fill="#6f8ec4" opacity="0.4"/><rect x="40.0" y="31.6" width="0.8" height="12" fill="#6f8ec4" opacity="0.4"/>
<rect x="50.8" y="30.6" width="13.8" height="14.1" fill="#eaeaf2"/>
<rect x="51.8" y="35.6" width="12" height="1" fill="#6f8ec4" opacity="0.5"/><rect x="51.8" y="38.6" width="12" height="1" fill="#6f8ec4" opacity="0.5"/><rect x="51.8" y="41.6" width="12" height="1.5" fill="#6f8ec4" opacity="0.5"/>
<rect x="65.5" y="30.6" width="13.8" height="14.1" fill="#eaeaf2"/>
<rect x="66.5" y="35.6" width="12" height="1" fill="#6f8ec4" opacity="0.5"/><rect x="66.5" y="38.6" width="12" height="1" fill="#6f8ec4" opacity="0.5"/><rect x="66.5" y="41.6" width="12" height="1.5" fill="#6f8ec4" opacity="0.5"/>
<rect x="80.2" y="30.6" width="13.8" height="14.1" fill="#eaeaf2"/>
<rect x="81.2" y="35.6" width="12" height="1" fill="#6f8ec4" opacity="0.5"/><rect x="81.2" y="38.6" width="12" height="1" fill="#6f8ec4" opacity="0.5"/><rect x="81.2" y="41.6" width="12" height="1.5" fill="#6f8ec4" opacity="0.5"/>
<rect x="95.0" y="30.6" width="13.8" height="14.1" fill="#eaeaf2"/>
<rect x="96.0" y="35.6" width="12" height="1" fill="#6f8ec4" opacity="0.5"/><rect x="96.0" y="38.6" width="12" height="1" fill="#6f8ec4" opacity="0.5"/><rect x="96.0" y="41.6" width="12" height="1.5" fill="#6f8ec4" opacity="0.5"/>
<rect x="109.8" y="30.6" width="13.8" height="14.1" fill="#eaeaf2"/>
<rect x="110.8" y="35.6" width="12" height="1" fill="#6f8ec4" opacity="0.5"/><rect x="110.8" y="38.6" width="12" height="1" fill="#6f8ec4" opacity="0.5"/><rect x="110.8" y="41.6" width="12" height="1.5" fill="#6f8ec4" opacity="0.5"/>
<rect x="6.5" y="45.7" width="13.8" height="14.1" fill="#eaeaf2"/>
<path d="M8.0 58.2Q13.5 44.7 18.5 58.2Z" fill="#6f8ec4" opacity="0.8"/>
<rect x="21.2" y="45.7" width="13.8" height="14.1" fill="#eaeaf2"/>
<rect x="22.8" y="46.7" width="1.3" height="12" fill="#6f8ec4" opacity="0.85"/><rect x="30.8" y="46.7" width="1.3" height="12" fill="#6f8ec4" opacity="0.85"/>
<rect x="36.0" y="45.7" width="13.8" height="14.1" fill="#eaeaf2"/>
<rect x="37.0" y="46.7" width="0.8" height="12" fill="#6f8ec4" opacity="0.4"/><rect x="40.0" y="46.7" width="0.8" height="12" fill="#6f8ec4" opacity="0.4"/>
<rect x="50.8" y="45.7" width="13.8" height="14.1" fill="#eaeaf2"/>
<rect x="65.5" y="45.7" width="13.8" height="14.1" fill="#eaeaf2"/>
<path d="M67.0 47.7L78.0 58.2H67.0Z" fill="#6f8ec4" opacity="0.8"/>
<rect x="80.2" y="45.7" width="13.8" height="14.1" fill="#eaeaf2"/>
<path d="M81.8 58.7V51.7L85.2 49.7L89.2 51.7L92.8 50.7V58.7Z" fill="#6f8ec4" opacity="0.8"/>
<rect x="95.0" y="45.7" width="13.8" height="14.1" fill="#eaeaf2"/>
<path d="M96.5 58.7V51.7L100.0 49.7L104.0 51.7L107.5 50.7V58.7Z" fill="#6f8ec4" opacity="0.8"/>
<rect x="109.8" y="45.7" width="13.8" height="14.1" fill="#eaeaf2"/>
<path d="M111.2 58.7V51.7L114.8 49.7L118.8 51.7L122.2 50.7V58.7Z" fill="#6f8ec4" opacity="0.8"/>
<rect x="6.5" y="60.7" width="13.8" height="14.1" fill="#eaeaf2"/>
<path d="M8.0 73.2Q13.5 59.7 18.5 73.2Z" fill="#6f8ec4" opacity="0.8"/>
<rect x="21.2" y="60.7" width="13.8" height="14.1" fill="#eaeaf2"/>
<rect x="22.8" y="61.7" width="1.3" height="12" fill="#6f8ec4" opacity="0.85"/><rect x="30.8" y="61.7" width="1.3" height="12" fill="#6f8ec4" opacity="0.85"/>
<rect x="36.0" y="60.7" width="13.8" height="14.1" fill="#eaeaf2"/>
<rect x="37.0" y="61.7" width="0.8" height="12" fill="#6f8ec4" opacity="0.4"/><rect x="40.0" y="61.7" width="0.8" height="12" fill="#6f8ec4" opacity="0.4"/>
<rect x="50.8" y="60.7" width="13.8" height="14.1" fill="#eaeaf2"/>
<path d="M52.2 62.7L63.2 73.2H52.2Z" fill="#6f8ec4" opacity="0.8"/>
<rect x="65.5" y="60.7" width="13.8" height="14.1" fill="#eaeaf2"/>
<rect x="80.2" y="60.7" width="13.8" height="14.1" fill="#eaeaf2"/>
<path d="M81.8 73.2L92.2 62.7V73.2Z" fill="#6f8ec4" opacity="0.8"/>
<rect x="95.0" y="60.7" width="13.8" height="14.1" fill="#eaeaf2"/>
<path d="M96.5 62.7L107.5 73.2H96.5Z" fill="#6f8ec4" opacity="0.8"/>
<rect x="109.8" y="60.7" width="13.8" height="14.1" fill="#eaeaf2"/>
<path d="M111.2 62.7L122.2 73.2H111.2Z" fill="#6f8ec4" opacity="0.8"/>
<rect x="6.5" y="75.8" width="13.8" height="14.1" fill="#eaeaf2"/>
<rect x="8.0" y="77.2" width="11" height="11" fill="#6f8ec4" opacity="0.8"/>
<rect x="21.2" y="75.8" width="13.8" height="14.1" fill="#eaeaf2"/>
<rect x="22.8" y="76.8" width="1.3" height="12" fill="#6f8ec4" opacity="0.85"/><rect x="30.8" y="76.8" width="1.3" height="12" fill="#6f8ec4" opacity="0.85"/>
<rect x="36.0" y="75.8" width="13.8" height="14.1" fill="#eaeaf2"/>
<rect x="37.0" y="76.8" width="0.8" height="12" fill="#6f8ec4" opacity="0.4"/><rect x="40.0" y="76.8" width="0.8" height="12" fill="#6f8ec4" opacity="0.4"/>
<rect x="50.8" y="75.8" width="13.8" height="14.1" fill="#eaeaf2"/>
<rect x="52.2" y="77.2" width="11" height="11" fill="#6f8ec4" opacity="0.8"/>
<rect x="65.5" y="75.8" width="13.8" height="14.1" fill="#eaeaf2"/>
<path d="M66.5 77.2L78.0 80.8L67.5 88.2Z" fill="#6f8ec4" opacity="0.8"/>
<rect x="80.2" y="75.8" width="13.8" height="14.1" fill="#eaeaf2"/>
<path d="M81.2 76.8L85.2 85.8L89.2 78.8L92.8 88.2H81.2Z" fill="#6f8ec4" opacity="0.85"/>
<rect x="95.0" y="75.8" width="13.8" height="14.1" fill="#eaeaf2"/>
<rect x="96.5" y="77.2" width="11" height="11" fill="#6f8ec4" opacity="0.8"/>
<rect x="109.8" y="75.8" width="13.8" height="14.1" fill="#eaeaf2"/>
<path d="M111.2 77.8L122.2 88.2H111.2Z" fill="#6f8ec4" opacity="0.8"/>
<rect x="6.5" y="90.8" width="13.8" height="14.1" fill="#eaeaf2"/>
<rect x="8.0" y="92.3" width="11" height="11" fill="#6f8ec4" opacity="0.8"/>
<rect x="21.2" y="90.8" width="13.8" height="14.1" fill="#eaeaf2"/>
<rect x="22.8" y="91.8" width="1.3" height="12" fill="#6f8ec4" opacity="0.85"/><rect x="30.8" y="91.8" width="1.3" height="12" fill="#6f8ec4" opacity="0.85"/>
<rect x="36.0" y="90.8" width="13.8" height="14.1" fill="#eaeaf2"/>
<rect x="37.0" y="91.8" width="0.8" height="12" fill="#6f8ec4" opacity="0.4"/><rect x="40.0" y="91.8" width="0.8" height="12" fill="#6f8ec4" opacity="0.4"/>
<rect x="50.8" y="90.8" width="13.8" height="14.1" fill="#eaeaf2"/>
<rect x="52.2" y="92.3" width="11" height="11" fill="#6f8ec4" opacity="0.8"/>
<rect x="65.5" y="90.8" width="13.8" height="14.1" fill="#eaeaf2"/>
<path d="M66.5 92.3L78.0 95.8L67.5 103.3Z" fill="#6f8ec4" opacity="0.8"/>
<rect x="80.2" y="90.8" width="13.8" height="14.1" fill="#eaeaf2"/>
<rect x="81.8" y="92.3" width="11" height="11" fill="#6f8ec4" opacity="0.8"/>
<rect x="95.0" y="90.8" width="13.8" height="14.1" fill="#eaeaf2"/>
<rect x="109.8" y="90.8" width="13.8" height="14.1" fill="#eaeaf2"/>
<rect x="111.2" y="92.3" width="11" height="11" fill="#6f8ec4" opacity="0.35"/>
<rect x="6.5" y="105.9" width="13.8" height="14.1" fill="#eaeaf2"/>
<rect x="8.0" y="107.4" width="11" height="11" fill="#6f8ec4" opacity="0.8"/>
<rect x="21.2" y="105.9" width="13.8" height="14.1" fill="#eaeaf2"/>
<rect x="22.8" y="106.9" width="1.3" height="12" fill="#6f8ec4" opacity="0.85"/><rect x="30.8" y="106.9" width="1.3" height="12" fill="#6f8ec4" opacity="0.85"/>
<rect x="36.0" y="105.9" width="13.8" height="14.1" fill="#eaeaf2"/>
<rect x="37.0" y="106.9" width="0.8" height="12" fill="#6f8ec4" opacity="0.4"/><rect x="40.0" y="106.9" width="0.8" height="12" fill="#6f8ec4" opacity="0.4"/>
<rect x="50.8" y="105.9" width="13.8" height="14.1" fill="#eaeaf2"/>
<path d="M52.2 107.9L63.2 118.4H52.2Z" fill="#6f8ec4" opacity="0.8"/>
<rect x="65.5" y="105.9" width="13.8" height="14.1" fill="#eaeaf2"/>
<path d="M67.0 107.9L78.0 118.4H67.0Z" fill="#6f8ec4" opacity="0.8"/>
<rect x="80.2" y="105.9" width="13.8" height="14.1" fill="#eaeaf2"/>
<path d="M81.8 107.9L92.8 118.4H81.8Z" fill="#6f8ec4" opacity="0.8"/>
<rect x="95.0" y="105.9" width="13.8" height="14.1" fill="#eaeaf2"/>
<rect x="96.5" y="107.4" width="11" height="11" fill="#6f8ec4" opacity="0.35"/>
<rect x="109.8" y="105.9" width="13.8" height="14.1" fill="#eaeaf2"/>
</svg>
<svg class="a" style="left:1357px;top:580px" width="126" height="92" viewBox="0 0 126 93" preserveAspectRatio="none"><rect width="126" height="93" fill="#fff"/>
<rect x="6" y="2.5" width="32.5" height="25" fill="#eaeaf2"/>
<g transform="translate(6 2.5)"><path d="M20 25L22 21L25 18L27 14L28.5 10L29 2H30L30.5 12L31 25Z" fill="#5a78b0"/></g>
<rect x="17" y="0.8999999999999999" width="10" height="0.9" fill="#c4c4c4"/>
<rect x="2" y="4.5" width="2.5" height="21" fill="#e2e2e2"/>
<rect x="7" y="28.7" width="30" height="1" fill="#e2e2e2"/>
<rect x="49" y="2.5" width="32.5" height="25" fill="#eaeaf2"/>
<g transform="translate(49 2.5)"><path d="M1 25V19H2.5V25ZM7 25V11H8.5V25ZM9 25V4H10.5V25ZM24 25V14H25.5V25ZM26.5 25V10H28V25ZM30.5 25V2H32V25Z" fill="#5a78b0"/></g>
<rect x="60" y="0.8999999999999999" width="10" height="0.9" fill="#c4c4c4"/>
<rect x="45" y="4.5" width="2.5" height="21" fill="#e2e2e2"/>
<rect x="50" y="28.7" width="30" height="1" fill="#e2e2e2"/>
<rect x="92" y="2.5" width="32.5" height="25" fill="#eaeaf2"/>
<g transform="translate(92 2.5)"><path d="M1 25V2H2.5V25ZM6 25V24H8V25Z" fill="#5a78b0"/></g>
<rect x="103" y="0.8999999999999999" width="10" height="0.9" fill="#c4c4c4"/>
<rect x="88" y="4.5" width="2.5" height="21" fill="#e2e2e2"/>
<rect x="93" y="28.7" width="30" height="1" fill="#e2e2e2"/>
<rect x="6" y="34" width="32.5" height="25" fill="#eaeaf2"/>
<g transform="translate(6 34)"><path d="M1 25V18H2.5V25ZM3 25V2H4.5V25ZM6.5 25V17H8V25Z" fill="#5a78b0"/></g>
<rect x="17" y="32.4" width="10" height="0.9" fill="#c4c4c4"/>
<rect x="2" y="36" width="2.5" height="21" fill="#e2e2e2"/>
<rect x="7" y="60.2" width="30" height="1" fill="#e2e2e2"/>
<rect x="49" y="34" width="32.5" height="25" fill="#eaeaf2"/>
<g transform="translate(49 34)"><path d="M1 25V2H2V12L3 17L5 21L8 24L12 25Z" fill="#5a78b0"/></g>
<rect x="60" y="32.4" width="10" height="0.9" fill="#c4c4c4"/>
<rect x="45" y="36" width="2.5" height="21" fill="#e2e2e2"/>
<rect x="50" y="60.2" width="30" height="1" fill="#e2e2e2"/>
<rect x="92" y="34" width="32.5" height="25" fill="#eaeaf2"/>
<g transform="translate(92 34)"><path d="M0.5 25V4L2 10L4 15L6 17L9 14L14 11L20 8L25 4L28 6L30 14L32 25Z" fill="#5a78b0"/></g>
<rect x="103" y="32.4" width="10" height="0.9" fill="#c4c4c4"/>
<rect x="88" y="36" width="2.5" height="21" fill="#e2e2e2"/>
<rect x="93" y="60.2" width="30" height="1" fill="#e2e2e2"/>
<rect x="6" y="65.5" width="32.5" height="25" fill="#eaeaf2"/>
<g transform="translate(6 65.5)"><path d="M1 25V2H2.5V25ZM14 25V23H19V25ZM27 25V21H28.5V25Z" fill="#5a78b0"/></g>
<rect x="17" y="63.9" width="10" height="0.9" fill="#c4c4c4"/>
<rect x="2" y="67.5" width="2.5" height="21" fill="#e2e2e2"/>
<rect x="7" y="91.7" width="30" height="1" fill="#e2e2e2"/>
<rect x="49" y="65.5" width="32.5" height="25" fill="#eaeaf2"/>
<g transform="translate(49 65.5)"><path d="M1 25V2H2.5V25Z" fill="#5a78b0"/></g>
<rect x="60" y="63.9" width="10" height="0.9" fill="#c4c4c4"/>
<rect x="45" y="67.5" width="2.5" height="21" fill="#e2e2e2"/>
<rect x="50" y="91.7" width="30" height="1" fill="#e2e2e2"/>
</svg>
<svg class="a" style="left:1486px;top:116px" width="10" height="5"><path d="M0 5L5 0L10 5Z" fill="#2c3843"/></svg>
<div class="a" style="left:1486px;top:123px;width:11px;height:540px;border:1px solid #2c3843;border-radius:6px"></div>
<div class="a" style="left:1488px;top:124px;width:7px;height:322px;background:#76797b;border-radius:4px"></div>
<svg class="a" style="left:1486px;top:666px" width="10" height="5"><path d="M0 0L10 0L5 5Z" fill="#2c3843"/></svg>
<div class="a" style="left:1024px;top:678px;width:84px;height:18px;background:#2f3a44;border-radius:2px"></div>
<div class="t" style="left:1028px;top:682px;font-size:10.3px;color:#e2e4e5">Variable explorer</div>
<div class="a" style="left:1110px;top:678px;width:28px;height:18px;background:#455866;border-radius:2px"></div>
<div class="a" style="left:1110px;top:678px;width:28px;height:2px;background:#2b6aa6"></div>
<div class="t" style="left:1113px;top:683px;font-size:10px;color:#e6e8e9">Plots</div>
<div class="t" style="left:664px;top:713px;font-size:10px;color:#dfe1e2">Source</div>
<div class="a" style="left:704px;top:706px;width:80px;height:21px;border:1px solid #27323c;border-radius:3px"></div>
<div class="a" style="left:772px;top:707px;width:1px;height:19px;background:#27323c"></div>
<div class="t" style="left:708px;top:712px;font-size:10px;color:#dfe1e2">Console</div>
<div class="t" style="left:801px;top:713px;font-size:10px;color:#dfe1e2">Object</div>
<div class="a" style="left:839px;top:706px;width:604px;height:21px;border:1px solid #27323c;border-radius:3px"></div>
<div class="a" style="left:1432px;top:707px;width:1px;height:19px;background:#27323c"></div>
<svg class="a" style="left:1452px;top:707px" width="12" height="14" viewBox="0 0 12 14"><path d="M3 6V4A3 3 0 0 1 9 4" fill="none" stroke="#f2f2f2" stroke-width="1.6"/><rect x="1.5" y="6" width="9" height="7" rx="1" fill="#f2f2f2"/></svg>
<div class="hb" style="left:1481px;top:711px"></div>
<div class="a" style="left:836px;top:744px;width:477px;height:14px;background:#4a4a4a;border:1px solid #2f74b5;border-bottom:none;border-radius:3px 3px 0 0"></div>
<div class="a" style="left:851px;top:754px;width:3px;height:4px;background:#cfcfcf"></div><div class="a" style="left:856px;top:754px;width:3px;height:4px;background:#cfcfcf"></div>
<svg class="a" style="left:1488px;top:722px" width="12" height="40" viewBox="0 0 12 40"><rect x="1" y="2" width="10" height="35" rx="5" fill="none" stroke="#2c3843"/><rect x="2" y="12" width="9" height="12" rx="4.5" fill="#7a7d7f"/></svg>
<div class="a" style="left:1046px;top:759px;width:40px;height:18px;background:#2f3a44;border-radius:2px"></div>
<div class="t" style="left:1052px;top:763px;font-size:10px;color:#e2e4e5">History</div>
<div class="a" style="left:1088px;top:759px;width:26px;height:18px;background:#455866;border-radius:2px"></div>
<div class="a" style="left:1088px;top:759px;width:26px;height:2px;background:#2b6aa6"></div>
<div class="t" style="left:1091px;top:764px;font-size:10px;color:#e6e8e9">Help</div>
<!-- SPLITTERS -->
<div class="a" style="left:263px;top:78px;width:4px;height:699px;background:#2b3640"></div>
<div class="a" style="left:655px;top:78px;width:4px;height:699px;background:#2b3640"></div>
<div class="a" style="left:0;top:461px;width:263px;height:4px;background:#2b3640"></div>
<div class="a" style="left:659px;top:699px;width:841px;height:4px;background:#2b3640"></div>
<!-- STATUS BAR -->
<div class="a" style="left:0;top:777px;width:1500px;height:20px;background:#323e48"></div>
<svg class="a" style="left:891px;top:783px" width="11" height="10" viewBox="0 0 11 10"><path d="M1 2L3 4L5 2M6 5L8 8L10 3" fill="none" stroke="#dcdcdc" stroke-width="1.2"/></svg>
<div class="t" style="left:906px;top:784px;font-size:10px;color:#e0e2e3">LSP Python: ready</div>
<svg class="a" style="left:1015px;top:783px" width="11" height="11" viewBox="0 0 11 11"><path d="M5.5 1L10 3.2V7.8L5.5 10L1 7.8V3.2Z M1 3.2L5.5 5.5L10 3.2M5.5 5.5V10" fill="none" stroke="#dcdcdc" stroke-width="1.1"/></svg>
<div class="t" style="left:1032px;top:784px;font-size:10px;color:#e0e2e3">conda: base (Python 3.8.5)</div>
<div class="t" style="left:1181px;top:784px;font-size:10px;color:#e0e2e3">Line 1163, Col 1</div>
<div class="t" style="left:1281px;top:784px;font-size:10px;color:#e0e2e3">UTF-8</div>
<div class="t" style="left:1337px;top:784px;font-size:10px;color:#e0e2e3">CRLF</div>
<div class="t" style="left:1387px;top:784px;font-size:10px;color:#e0e2e3">RW</div>
<!-- recording overlay -->
<div class="a" style="left:1432px;top:761px;width:63px;height:31px;background:#2b2e2d"></div>
<div class="a" style="left:1463px;top:761px;width:1px;height:31px;background:#1d201f"></div>
<div class="a" style="left:1441px;top:770px;width:5px;height:15px;background:#b5b5b5"></div>
<div class="a" style="left:1450px;top:770px;width:5px;height:15px;background:#b5b5b5"></div>
<svg class="a" style="left:1470px;top:770px" width="19" height="15" viewBox="0 0 19 15"><rect x="0.8" y="0.8" width="17.4" height="13.4" fill="none" stroke="#b0b0b0" stroke-width="1.2"/><circle cx="9.5" cy="5.5" r="2.4" fill="#b0b0b0"/><path d="M3.5 14C4 10 7 9 9.5 9C12 9 15 10 15.5 14Z" fill="#b0b0b0"/></svg>

<!-- TASKBAR -->
<div class="a" style="left:0;top:797px;width:1500px;height:47px;background:linear-gradient(90deg,#e3ecf7 0%,#dfe8f5 30%,#dbe5f4 55%,#dde7f4 75%,#e2eaf5 100%)"></div>
<div class="a" style="left:0;top:797px;width:1500px;height:1px;background:#cfd8e3"></div>
<!-- windows logo -->
<svg class="a" style="left:525px;top:810px" width="22" height="22" viewBox="0 0 22 22"><defs><linearGradient id="wg" x1="0" y1="0" x2="1" y2="1"><stop offset="0" stop-color="#52c3f7"/><stop offset="1" stop-color="#0b6fd1"/></linearGradient></defs><rect x="0" y="0" width="10.4" height="10.4" rx="1" fill="url(#wg)"/><rect x="11.6" y="0" width="10.4" height="10.4" rx="1" fill="url(#wg)"/><rect x="0" y="11.6" width="10.4" height="10.4" rx="1" fill="url(#wg)"/><rect x="11.6" y="11.6" width="10.4" height="10.4" rx="1" fill="url(#wg)"/></svg>
<!-- search -->
<svg class="a" style="left:567px;top:809px" width="23" height="23" viewBox="0 0 23 23"><circle cx="13" cy="9.5" r="7.3" fill="none" stroke="#1c1c1c" stroke-width="2"/><path d="M8 14.5L2 20.5" stroke="#1c1c1c" stroke-width="2.4" stroke-linecap="round"/></svg>
<!-- task view -->
<svg class="a" style="left:610px;top:809px" width="24" height="23" viewBox="0 0 24 23"><rect x="7" y="1" width="16" height="14" rx="1.5" fill="#f5f5f5" stroke="#e0e0e0" stroke-width="0.6"/><rect x="0.5" y="7" width="17" height="15" rx="1.5" fill="#262626"/><rect x="7" y="7" width="10.5" height="8" fill="#a8a8a8"/></svg>
<!-- explorer folder -->
<svg class="a" style="left:652px;top:810px" width="25" height="21" viewBox="0 0 25 21"><path d="M0.5 2Q0.5 1 1.5 1H8.5L10.5 3H23.5Q24.5 3 24.5 4V20H0.5Z" fill="#e9ac1a"/><rect x="0.5" y="5" width="24" height="15.5" rx="1" fill="#fcd35a"/><rect x="5" y="15.5" width="15" height="5.5" rx="1.5" fill="#1a7ad8"/></svg>
<!-- chrome -->
<svg class="a" style="left:696px;top:809px" width="24" height="23" viewBox="0 0 24 23"><circle cx="11" cy="12" r="10.5" fill="#db4437"/><path d="M11 12L1.9 6.75A10.5 10.5 0 0 0 5.75 21.1Z" fill="#0f9d58"/><path d="M11 12L5.75 21.1A10.5 10.5 0 0 0 21.5 12Z" fill="#0f9d58"/><path d="M11 12L21.5 12A10.5 10.5 0 0 0 20.1 6.75L11 6.75Z" fill="#f4b400"/><path d="M11 12L16.3 21A10.5 10.5 0 0 0 21.5 12Z" fill="#f4b400"/><circle cx="11" cy="12" r="5" fill="#fff"/><circle cx="11" cy="12" r="3.8" fill="#4285f4"/><rect x="15" y="0.5" width="9" height="4" rx="1" fill="#6b6b6b"/><rect x="15" y="0.5" width="4.5" height="4" rx="1" fill="#e05050"/></svg>
<!-- spyder active -->
<div class="a" style="left:732px;top:801px;width:37px;height:38px;background:#eef3fa;border-radius:4px"></div>
<div class="a" style="left:743px;top:836px;width:15px;height:3px;background:#1673d4;border-radius:2px"></div>
<svg class="a" style="left:742px;top:813px" width="19" height="19" viewBox="0 0 19 19"><circle cx="9.5" cy="9.5" r="8.8" fill="#3b3b3b"/><path d="M4 2.5L9.5 9.5L15 2.5M1 9.5H18M4 16.5L9.5 9.5L15 16.5" stroke="#9a9a9a" stroke-width="1"/><path d="M1 11L5 8L9 12L13 7L18 9" stroke="#e0281e" stroke-width="2.6" fill="none"/></svg>
<!-- winrar -->
<svg class="a" style="left:782px;top:810px" width="24" height="21" viewBox="0 0 24 21"><rect x="0" y="0.5" width="24" height="6.5" rx="1" fill="#b8324c"/><rect x="0" y="7" width="24" height="6.5" rx="1" fill="#3d57c2"/><rect x="0" y="13.5" width="24" height="7" rx="1" fill="#2e9b3e"/><rect x="9" y="0" width="6" height="21" fill="#e4a12a"/><rect x="8" y="8" width="8" height="5" fill="#f6d9a2" stroke="#7a4b10" stroke-width="0.8"/></svg>
<!-- terminal -->
<svg class="a" style="left:826px;top:812px" width="22" height="17" viewBox="0 0 22 17"><rect x="0" y="0" width="22" height="17" rx="1" fill="#0c0c0c" stroke="#9a9a9a" stroke-width="0.8"/><path d="M2 2H8M9 3H12" stroke="#bbb" stroke-width="0.6"/></svg>
<!-- notepad++ -->
<svg class="a" style="left:869px;top:809px" width="22" height="22" viewBox="0 0 22 22"><path d="M1 3H13L17 7V21H1Z" fill="#eef5e6" stroke="#b9c8a8" stroke-width="0.6"/><ellipse cx="9" cy="15" rx="7" ry="5" fill="#74c043"/><ellipse cx="9" cy="13" rx="4" ry="2.5" fill="#e9f3d5"/><path d="M13 14L21 1" stroke="#e0a820" stroke-width="1.6"/></svg>
<!-- excel -->
<svg class="a" style="left:910px;top:809px" width="24" height="22" viewBox="0 0 24 22"><rect x="3" y="1" width="20" height="20" rx="1.5" fill="#eaf3e4" stroke="#7ab880" stroke-width="0.8"/><g fill="#2f8d4a"><rect x="14" y="5" width="7" height="3"/><rect x="14" y="10" width="7" height="3"/><rect x="14" y="15" width="7" height="3"/><rect x="5" y="15" width="7" height="3"/></g><path d="M2 4L12 3V14L2 13Z" fill="#1d7a3c"/><path d="M4.5 6L9.5 11M9.5 6L4.5 11" stroke="#fff" stroke-width="1.6"/></svg>
<!-- sublime-like -->
<svg class="a" style="left:953px;top:805px" width="30" height="28" viewBox="0 0 30 28"><rect x="0" y="5" width="24" height="23" rx="3" fill="#ec5a3a"/><path d="M17 10H9.5Q6 10 6 13Q6 16 9.5 16H14.5Q18 16 18 19Q18 22 14.5 22H6" fill="none" stroke="#fff" stroke-width="3"/><circle cx="22" cy="7" r="6.8" fill="#e04a44" stroke="#c86a64" stroke-width="0.6"/></svg>
<!-- taskbar dots -->
<div class="a" style="left:662px;top:836px;width:6px;height:2px;background:#707478;border-radius:1px"></div>
<div class="a" style="left:705px;top:836px;width:6px;height:2px;background:#707478;border-radius:1px"></div>
<div class="a" style="left:791px;top:836px;width:6px;height:2px;background:#707478;border-radius:1px"></div>
<div class="a" style="left:834px;top:836px;width:6px;height:2px;background:#707478;border-radius:1px"></div>
<div class="a" style="left:876px;top:836px;width:6px;height:2px;background:#707478;border-radius:1px"></div>
<div class="a" style="left:919px;top:836px;width:6px;height:2px;background:#707478;border-radius:1px"></div>
<div class="a" style="left:962px;top:836px;width:6px;height:2px;background:#707478;border-radius:1px"></div>
<!-- tray -->
<svg class="a" style="left:1336px;top:814px" width="14" height="9" viewBox="0 0 14 9"><path d="M1 8L7 2L13 8" fill="none" stroke="#1c1c1c" stroke-width="1.4"/></svg>
<svg class="a" style="left:1360px;top:808px" width="11" height="18" viewBox="0 0 11 18"><rect x="2.5" y="0.5" width="6" height="12" rx="3" fill="#111"/><path d="M5.5 13V17M3 17H8" stroke="#111" stroke-width="1.4"/></svg>
<svg class="a" style="left:1381px;top:813px" width="19" height="11" viewBox="0 0 19 11"><rect x="1" y="1" width="15" height="9" rx="1.2" fill="#222" stroke="#111"/><rect x="16.5" y="3.5" width="2" height="4" fill="#111"/><rect x="0" y="0" width="4" height="3" fill="#111"/></svg>
<svg class="a" style="left:1406px;top:809px" width="15" height="17" viewBox="0 0 15 17"><path d="M1 9A12 12 0 0 1 14 9M3.5 11.5A8 8 0 0 1 11.5 11.5M6 14A4 4 0 0 1 9 14" fill="none" stroke="#1c1c1c" stroke-width="1.1" transform="rotate(-45 7.5 12)"/><circle cx="12" cy="15" r="1.3" fill="#1c1c1c"/></svg>
<svg class="a" style="left:1428px;top:810px" width="18" height="15" viewBox="0 0 18 15"><path d="M1 5H4L8 1.5V13.5L4 10H1Z" fill="none" stroke="#1c1c1c" stroke-width="1.1"/><path d="M11 5A3 3 0 0 1 11 10M13 3A6 6 0 0 1 13 12M15 1.5A8.5 8.5 0 0 1 15 13.5" fill="none" stroke="#1c1c1c" stroke-width="1.1"/></svg>
<svg class="a" style="left:1459px;top:811px" width="25" height="25" viewBox="0 0 25 25"><path d="M1 1H17V13H6L3 16V13H1Z" fill="#111"/><path d="M4 4H14M4 7H14M4 10H10" stroke="#e0e6ef" stroke-width="1"/><circle cx="16.5" cy="16.5" r="7" fill="#dde4ee" stroke="#6a6f75" stroke-width="1.2"/><text x="16.5" y="20.3" font-size="10" font-family="Liberation Sans" text-anchor="middle" fill="#111">1</text></svg>

</body></html>
